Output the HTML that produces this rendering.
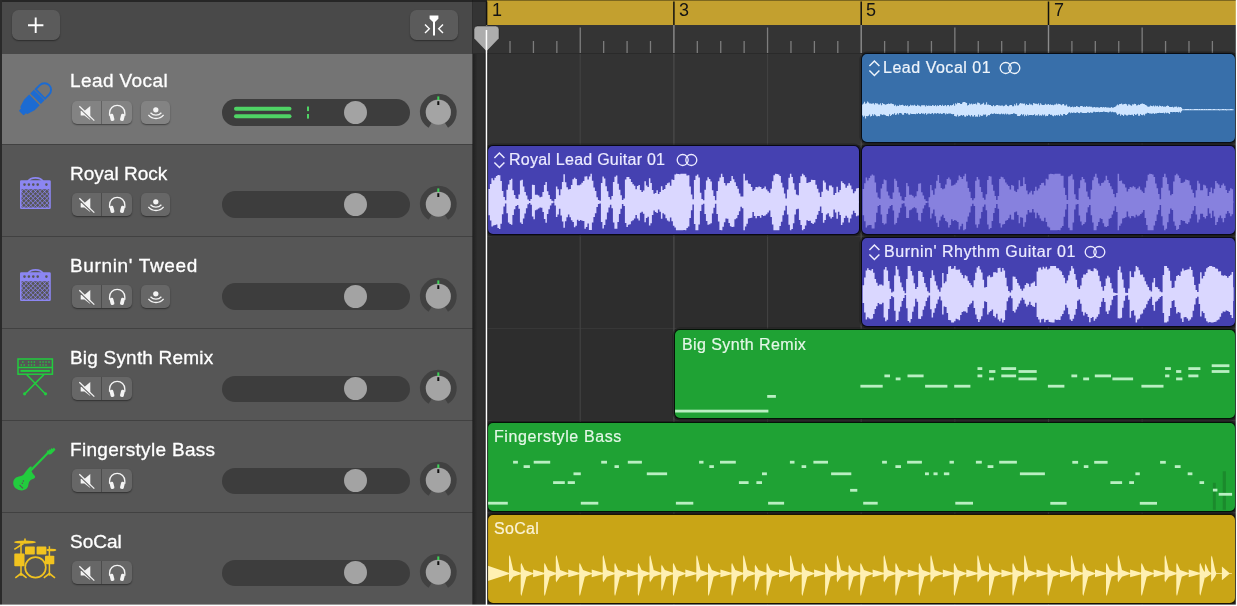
<!DOCTYPE html>
<html lang="en"><head><meta charset="utf-8"><title>Tracks</title>
<style>
*{box-sizing:border-box;margin:0;padding:0}
html,body{width:1237px;height:606px;overflow:hidden;background:#2d2d2d}
body{font-family:"Liberation Sans",sans-serif;position:relative;color:#fff}
.abs{position:absolute}
#left{position:absolute;left:0;top:0;width:473px;height:606px;background:#565656}
#lhead{position:absolute;left:0;top:0;width:473px;height:53.6px;background:#494949}
.row{position:absolute;left:0;width:473px;height:90.1px;background:#565656}
.row.sel{background:#747474}
.sep{position:absolute;left:0;width:473px;height:1px;background:#414141}
.tname{position:absolute;left:69.8px;top:16.9px;font-size:19px;line-height:22px;color:#fff;white-space:nowrap;-webkit-text-stroke:0.3px #fff;will-change:transform}
.btn{position:absolute;background:#676767;border-radius:5px;box-shadow:0 1px 1.5px rgba(0,0,0,.45)}
.sel .btn{background:#838383}
.ms{left:71.8px;top:47.2px;width:60px;height:23px}
.ms i{position:absolute;left:29.2px;top:0;width:1px;height:100%;background:#4c4c4c}
.sel .ms i{background:#626262}
.inp{left:140.5px;top:47.2px;width:29px;height:23px}
.slider{position:absolute;left:222.2px;top:45.7px;width:187.6px;height:26.6px;border-radius:13.3px;background:#3d3d3d}
.thumb{position:absolute;left:121.5px;top:1.8px;width:23px;height:23px;border-radius:50%;background:#a3a3a3}
.hbtn{position:absolute;top:10px;height:29.5px;width:48px;border-radius:6.5px;background:#5b5b5b;box-shadow:0 1px 1.5px rgba(0,0,0,.4)}
.region{position:absolute;border-radius:6px;border:1px solid rgba(0,0,0,.88);overflow:hidden;box-shadow:0 0 0 1.5px rgba(0,0,0,.28)}
.rlabel{position:absolute;font-size:16px;line-height:20px;white-space:nowrap;-webkit-text-stroke:0.2px currentColor;will-change:transform}
svg{position:absolute;left:0;top:0;overflow:visible}
</style></head>
<body>
<div class="abs" style="left:473px;top:0;width:764px;height:54px;background:#343434"></div>
<div class="abs" style="left:473px;top:54px;width:14px;height:552px;background:linear-gradient(90deg,#212121,#2e2e2e 4.5px)"></div>
<div class="abs" style="left:487px;top:54px;width:750px;height:89.7px;background:#333"></div>
<div class="abs" style="left:487px;top:143.7px;width:750px;height:1px;background:#373737"></div>
<div class="abs" style="left:487px;top:235.77999999999997px;width:750px;height:1px;background:#373737"></div>
<div class="abs" style="left:487px;top:327.86px;width:750px;height:1px;background:#373737"></div>
<div class="abs" style="left:487px;top:419.94px;width:750px;height:1px;background:#373737"></div>
<div class="abs" style="left:487px;top:512.02px;width:750px;height:1px;background:#373737"></div>
<svg width="1237" height="606"><rect x="486.00" y="54" width="1.2" height="552" fill="#4c4c4c"/><rect x="579.65" y="54" width="1.2" height="552" fill="#414141"/><rect x="673.30" y="54" width="1.2" height="552" fill="#4c4c4c"/><rect x="766.95" y="54" width="1.2" height="552" fill="#414141"/><rect x="860.60" y="54" width="1.2" height="552" fill="#4c4c4c"/><rect x="954.25" y="54" width="1.2" height="552" fill="#414141"/><rect x="1047.90" y="54" width="1.2" height="552" fill="#4c4c4c"/><rect x="1141.55" y="54" width="1.2" height="552" fill="#414141"/></svg>
<div class="abs" style="left:487px;top:0;width:750px;height:25px;background:#c3a02f;border-top:1.5px solid #7d671f"></div>
<div class="abs" style="left:473px;top:0;width:14px;height:1.5px;background:#222"></div>
<div class="abs" style="left:473px;top:53px;width:764px;height:1px;background:#2a2a2a"></div>
<svg width="1237" height="54"><rect x="485.85" y="1.5" width="1.5" height="23.5" fill="#111"/><rect x="485.90" y="25" width="1.4" height="28" fill="#8c8c8c"/><rect x="509.36" y="41" width="1.3" height="12" fill="#7c7c7c"/><rect x="532.78" y="41" width="1.3" height="12" fill="#7c7c7c"/><rect x="556.19" y="41" width="1.3" height="12" fill="#7c7c7c"/><rect x="579.60" y="27.5" width="1.3" height="25.5" fill="#7e7e7e"/><rect x="603.01" y="41" width="1.3" height="12" fill="#7c7c7c"/><rect x="626.43" y="41" width="1.3" height="12" fill="#7c7c7c"/><rect x="649.84" y="41" width="1.3" height="12" fill="#7c7c7c"/><rect x="673.15" y="1.5" width="1.5" height="23.5" fill="#111"/><rect x="673.20" y="25" width="1.4" height="28" fill="#8c8c8c"/><rect x="696.66" y="41" width="1.3" height="12" fill="#7c7c7c"/><rect x="720.08" y="41" width="1.3" height="12" fill="#7c7c7c"/><rect x="743.49" y="41" width="1.3" height="12" fill="#7c7c7c"/><rect x="766.90" y="27.5" width="1.3" height="25.5" fill="#7e7e7e"/><rect x="790.31" y="41" width="1.3" height="12" fill="#7c7c7c"/><rect x="813.73" y="41" width="1.3" height="12" fill="#7c7c7c"/><rect x="837.14" y="41" width="1.3" height="12" fill="#7c7c7c"/><rect x="860.45" y="1.5" width="1.5" height="23.5" fill="#111"/><rect x="860.50" y="25" width="1.4" height="28" fill="#8c8c8c"/><rect x="883.96" y="41" width="1.3" height="12" fill="#7c7c7c"/><rect x="907.38" y="41" width="1.3" height="12" fill="#7c7c7c"/><rect x="930.79" y="41" width="1.3" height="12" fill="#7c7c7c"/><rect x="954.20" y="27.5" width="1.3" height="25.5" fill="#7e7e7e"/><rect x="977.61" y="41" width="1.3" height="12" fill="#7c7c7c"/><rect x="1001.03" y="41" width="1.3" height="12" fill="#7c7c7c"/><rect x="1024.44" y="41" width="1.3" height="12" fill="#7c7c7c"/><rect x="1047.75" y="1.5" width="1.5" height="23.5" fill="#111"/><rect x="1047.80" y="25" width="1.4" height="28" fill="#8c8c8c"/><rect x="1071.26" y="41" width="1.3" height="12" fill="#7c7c7c"/><rect x="1094.67" y="41" width="1.3" height="12" fill="#7c7c7c"/><rect x="1118.09" y="41" width="1.3" height="12" fill="#7c7c7c"/><rect x="1141.50" y="27.5" width="1.3" height="25.5" fill="#7e7e7e"/><rect x="1164.91" y="41" width="1.3" height="12" fill="#7c7c7c"/><rect x="1188.33" y="41" width="1.3" height="12" fill="#7c7c7c"/><rect x="1211.74" y="41" width="1.3" height="12" fill="#7c7c7c"/></svg>
<div class="abs" style="left:491.8px;top:-0.5px;font-size:18px;line-height:20px;color:#141414;will-change:transform">1</div>
<div class="abs" style="left:679.1px;top:-0.5px;font-size:18px;line-height:20px;color:#141414;will-change:transform">3</div>
<div class="abs" style="left:866.4px;top:-0.5px;font-size:18px;line-height:20px;color:#141414;will-change:transform">5</div>
<div class="abs" style="left:1053.7px;top:-0.5px;font-size:18px;line-height:20px;color:#141414;will-change:transform">7</div>
<div class="region" style="left:860.9px;top:53px;width:375.0px;height:90px;background:#386faa"><svg width="14" height="20" style="left:5.900000000000091px;top:5px"><path d="M1.400 7L6.400 2L11.400 7M1.400 11.500L6.400 16.500L11.400 11.500" stroke="#eef4fb" stroke-width="1.500" fill="none"/></svg><div class="rlabel" style="top:4.00px;left:21.4px;letter-spacing:0.52px;color:#eef4fb">Lead Vocal 01</div><svg width="24" height="16" style="left:137.60000000000002px;top:7.3px"><circle cx="6.700" cy="7" r="5.500" stroke="#eef4fb" stroke-width="1.300" fill="none"/><circle cx="15.300" cy="7" r="5.500" stroke="#eef4fb" stroke-width="1.300" fill="none"/></svg><svg width="380" height="90"><path transform="translate(-861.9 -54.0)" d="M862.0 109.7V104.6H863.0V103.4H864.0V101.8H865.0V103.8H866.0V103.3H867.0V101.5H868.0V102.6H869.0V103.4H870.0V103.5H871.0V103.8H872.0V103.5H873.0V103.3H874.0V104.5H875.0V103.1H876.0V103.6H877.0V103.6H878.0V104.5H879.0V104.4H880.0V103.3H881.0V105.2H882.0V103.1H883.0V104.0H884.0V104.3H885.0V104.7H886.0V104.2H887.0V103.9H888.0V103.5H889.0V104.0H890.0V103.6H891.0V103.5H892.0V104.1H893.0V104.3H894.0V105.7H895.0V104.8H896.0V106.3H897.0V105.6H898.0V105.9H899.0V104.8H900.0V105.3H901.0V105.1H902.0V104.8H903.0V105.5H904.0V105.9H905.0V105.3H906.0V106.1H907.0V105.3H908.0V106.4H909.0V105.9H910.0V104.8H911.0V105.6H912.0V105.3H913.0V105.4H914.0V104.7H915.0V105.7H916.0V106.1H917.0V104.7H918.0V105.5H919.0V105.7H920.0V106.5H921.0V105.3H922.0V105.3H923.0V105.2H924.0V105.2H925.0V106.5H926.0V105.2H927.0V106.0H928.0V105.4H929.0V105.8H930.0V105.8H931.0V105.9H932.0V105.0H933.0V105.4H934.0V105.9H935.0V105.0H936.0V106.2H937.0V105.2H938.0V105.9H939.0V104.9H940.0V104.9H941.0V105.9H942.0V104.8H943.0V106.1H944.0V105.5H945.0V105.0H946.0V106.2H947.0V105.0H948.0V105.0H949.0V106.3H950.0V104.9H951.0V105.5H952.0V105.1H953.0V103.8H954.0V105.7H955.0V103.3H956.0V104.3H957.0V102.8H958.0V103.0H959.0V103.0H960.0V103.9H961.0V103.9H962.0V102.6H963.0V102.0H964.0V102.1H965.0V102.5H966.0V103.0H967.0V105.4H968.0V104.9H969.0V103.6H970.0V104.2H971.0V103.6H972.0V104.4H973.0V103.8H974.0V104.0H975.0V103.5H976.0V104.5H977.0V102.4H978.0V102.7H979.0V103.2H980.0V104.8H981.0V104.2H982.0V103.8H983.0V102.8H984.0V104.8H985.0V104.6H986.0V102.3H987.0V104.7H988.0V104.4H989.0V104.9H990.0V105.0H991.0V106.1H992.0V106.2H993.0V105.1H994.0V106.3H995.0V105.7H996.0V104.9H997.0V104.9H998.0V105.6H999.0V105.5H1000.0V105.7H1001.0V105.6H1002.0V105.4H1003.0V106.3H1004.0V105.7H1005.0V104.7H1006.0V104.8H1007.0V106.0H1008.0V106.3H1009.0V105.2H1010.0V105.0H1011.0V105.1H1012.0V106.3H1013.0V106.3H1014.0V104.3H1015.0V105.5H1016.0V103.3H1017.0V105.5H1018.0V105.2H1019.0V103.8H1020.0V103.1H1021.0V103.5H1022.0V103.6H1023.0V103.7H1024.0V103.6H1025.0V105.3H1026.0V104.1H1027.0V104.9H1028.0V104.9H1029.0V103.6H1030.0V104.6H1031.0V104.6H1032.0V105.3H1033.0V103.1H1034.0V103.6H1035.0V103.7H1036.0V103.8H1037.0V104.3H1038.0V103.2H1039.0V105.2H1040.0V103.2H1041.0V104.4H1042.0V105.0H1043.0V105.0H1044.0V104.7H1045.0V103.7H1046.0V104.7H1047.0V104.4H1048.0V104.0H1049.0V104.9H1050.0V104.3H1051.0V105.1H1052.0V104.7H1053.0V105.2H1054.0V104.4H1055.0V104.5H1056.0V103.6H1057.0V104.5H1058.0V103.7H1059.0V104.0H1060.0V104.6H1061.0V105.2H1062.0V104.2H1063.0V103.9H1064.0V105.4H1065.0V105.5H1066.0V104.5H1067.0V106.5H1068.0V106.8H1069.0V106.2H1070.0V107.2H1071.0V106.9H1072.0V106.5H1073.0V107.3H1074.0V106.7H1075.0V107.0H1076.0V106.0H1077.0V106.6H1078.0V107.0H1079.0V107.2H1080.0V106.1H1081.0V106.1H1082.0V106.3H1083.0V107.0H1084.0V106.5H1085.0V107.0H1086.0V106.1H1087.0V106.7H1088.0V106.7H1089.0V106.4H1090.0V106.7H1091.0V106.7H1092.0V107.6H1093.0V107.2H1094.0V106.9H1095.0V107.5H1096.0V107.2H1097.0V107.2H1098.0V107.6H1099.0V107.8H1100.0V107.1H1101.0V107.1H1102.0V107.6H1103.0V107.0H1104.0V107.4H1105.0V107.1H1106.0V107.6H1107.0V107.4H1108.0V107.6H1109.0V107.8H1110.0V107.8H1111.0V107.1H1112.0V107.8H1113.0V107.5H1114.0V107.1H1115.0V106.6H1116.0V105.5H1117.0V104.5H1118.0V105.3H1119.0V103.9H1120.0V103.9H1121.0V103.5H1122.0V104.5H1123.0V104.3H1124.0V104.1H1125.0V103.7H1126.0V104.3H1127.0V105.7H1128.0V104.2H1129.0V104.5H1130.0V105.3H1131.0V105.7H1132.0V104.2H1133.0V104.4H1134.0V103.7H1135.0V103.9H1136.0V105.6H1137.0V105.2H1138.0V104.5H1139.0V105.0H1140.0V104.1H1141.0V103.7H1142.0V103.6H1143.0V104.0H1144.0V104.3H1145.0V104.9H1146.0V105.5H1147.0V106.6H1148.0V106.7H1149.0V106.5H1150.0V105.6H1151.0V106.1H1152.0V106.3H1153.0V105.5H1154.0V106.5H1155.0V105.6H1156.0V106.2H1157.0V105.8H1158.0V106.8H1159.0V105.5H1160.0V106.0H1161.0V106.5H1162.0V106.1H1163.0V106.8H1164.0V106.5H1165.0V106.7H1166.0V106.0H1167.0V105.6H1168.0V106.1H1169.0V107.0H1170.0V107.1H1171.0V107.0H1172.0V106.8H1173.0V107.5H1174.0V106.7H1175.0V106.7H1176.0V106.5H1177.0V107.4H1178.0V106.7H1179.0V107.3H1180.0V106.9H1181.0V107.7H1182.0V109.2H1183.0V109.2H1184.0V109.2H1185.0V109.1H1186.0V109.0H1187.0V109.1H1188.0V109.0H1189.0V109.2H1190.0V109.0H1191.0V109.2H1192.0V109.2H1193.0V109.2H1194.0V109.1H1195.0V109.1H1196.0V109.1H1197.0V109.1H1198.0V109.2H1199.0V109.1H1200.0V109.2H1201.0V109.1H1202.0V109.1H1203.0V109.2H1204.0V109.1H1205.0V109.2H1206.0V109.1H1207.0V109.2H1208.0V109.1H1209.0V109.1H1210.0V109.1H1211.0V109.2H1212.0V109.2H1213.0V109.0H1214.0V109.1H1215.0V109.2H1216.0V109.2H1217.0V109.2H1218.0V109.1H1219.0V109.2H1220.0V109.2H1221.0V109.2H1222.0V109.1H1223.0V109.1H1224.0V109.2H1225.0V109.1H1226.0V109.2H1227.0V109.2H1228.0V109.2H1229.0V109.2H1230.0V109.1H1231.0V109.1H1232.0V109.2H1233.0V109.2H1233.5V109.7V110.2H1233.0V110.3H1232.0V110.3H1231.0V110.3H1230.0V110.3H1229.0V110.2H1228.0V110.3H1227.0V110.4H1226.0V110.2H1225.0V110.2H1224.0V110.2H1223.0V110.3H1222.0V110.3H1221.0V110.3H1220.0V110.4H1219.0V110.2H1218.0V110.3H1217.0V110.2H1216.0V110.3H1215.0V110.2H1214.0V110.2H1213.0V110.2H1212.0V110.2H1211.0V110.3H1210.0V110.2H1209.0V110.3H1208.0V110.3H1207.0V110.2H1206.0V110.3H1205.0V110.2H1204.0V110.2H1203.0V110.2H1202.0V110.3H1201.0V110.2H1200.0V110.2H1199.0V110.2H1198.0V110.2H1197.0V110.3H1196.0V110.3H1195.0V110.2H1194.0V110.3H1193.0V110.2H1192.0V110.3H1191.0V110.2H1190.0V110.3H1189.0V110.2H1188.0V110.3H1187.0V110.2H1186.0V110.2H1185.0V110.3H1184.0V110.2H1183.0V110.2H1182.0V111.2H1181.0V112.8H1180.0V111.8H1179.0V112.5H1178.0V112.0H1177.0V112.1H1176.0V112.3H1175.0V112.1H1174.0V111.9H1173.0V112.2H1172.0V112.0H1171.0V112.1H1170.0V113.9H1169.0V113.3H1168.0V112.7H1167.0V113.3H1166.0V112.6H1165.0V113.4H1164.0V112.8H1163.0V112.9H1162.0V112.9H1161.0V112.9H1160.0V112.8H1159.0V112.9H1158.0V113.0H1157.0V113.5H1156.0V113.2H1155.0V114.1H1154.0V113.3H1153.0V113.4H1152.0V113.7H1151.0V113.5H1150.0V113.4H1149.0V112.9H1148.0V112.7H1147.0V113.4H1146.0V113.7H1145.0V115.4H1144.0V114.5H1143.0V115.3H1142.0V115.1H1141.0V114.0H1140.0V115.7H1139.0V115.8H1138.0V113.8H1137.0V114.5H1136.0V115.1H1135.0V114.0H1134.0V115.9H1133.0V114.7H1132.0V114.8H1131.0V114.9H1130.0V114.7H1129.0V114.8H1128.0V115.5H1127.0V115.4H1126.0V114.8H1125.0V114.4H1124.0V115.9H1123.0V115.0H1122.0V114.5H1121.0V115.7H1120.0V113.7H1119.0V114.2H1118.0V115.0H1117.0V113.5H1116.0V112.2H1115.0V112.2H1114.0V112.2H1113.0V111.7H1112.0V112.2H1111.0V111.6H1110.0V111.7H1109.0V112.4H1108.0V112.3H1107.0V111.9H1106.0V111.9H1105.0V111.7H1104.0V111.5H1103.0V111.9H1102.0V111.9H1101.0V112.1H1100.0V112.3H1099.0V111.7H1098.0V112.0H1097.0V112.1H1096.0V112.3H1095.0V111.7H1094.0V111.7H1093.0V112.7H1092.0V112.7H1091.0V112.2H1090.0V112.9H1089.0V112.5H1088.0V112.2H1087.0V112.9H1086.0V113.1H1085.0V113.1H1084.0V113.0H1083.0V113.1H1082.0V112.6H1081.0V112.2H1080.0V113.3H1079.0V113.0H1078.0V112.2H1077.0V112.6H1076.0V112.9H1075.0V112.8H1074.0V112.6H1073.0V113.1H1072.0V112.6H1071.0V113.3H1070.0V112.2H1069.0V112.7H1068.0V113.9H1067.0V115.0H1066.0V115.1H1065.0V114.1H1064.0V114.1H1063.0V115.8H1062.0V115.3H1061.0V114.2H1060.0V116.0H1059.0V114.7H1058.0V115.5H1057.0V115.1H1056.0V115.8H1055.0V115.3H1054.0V116.3H1053.0V115.8H1052.0V114.8H1051.0V114.9H1050.0V114.0H1049.0V114.6H1048.0V116.1H1047.0V115.7H1046.0V116.3H1045.0V114.5H1044.0V115.4H1043.0V114.6H1042.0V115.7H1041.0V115.2H1040.0V115.8H1039.0V114.3H1038.0V115.5H1037.0V115.2H1036.0V115.8H1035.0V114.3H1034.0V115.0H1033.0V115.2H1032.0V115.0H1031.0V114.9H1030.0V114.9H1029.0V115.4H1028.0V114.4H1027.0V116.0H1026.0V114.7H1025.0V116.2H1024.0V114.2H1023.0V115.2H1022.0V114.0H1021.0V115.3H1020.0V116.0H1019.0V116.0H1018.0V116.0H1017.0V114.3H1016.0V114.0H1015.0V113.5H1014.0V113.3H1013.0V114.0H1012.0V114.0H1011.0V114.2H1010.0V114.6H1009.0V114.5H1008.0V113.8H1007.0V114.4H1006.0V113.6H1005.0V114.6H1004.0V113.7H1003.0V114.3H1002.0V113.4H1001.0V114.3H1000.0V114.3H999.0V113.7H998.0V114.1H997.0V113.7H996.0V114.1H995.0V113.3H994.0V113.7H993.0V114.0H992.0V113.6H991.0V114.0H990.0V115.2H989.0V115.0H988.0V115.8H987.0V116.8H986.0V114.6H985.0V114.8H984.0V114.4H983.0V115.7H982.0V115.9H981.0V115.2H980.0V116.8H979.0V114.4H978.0V116.7H977.0V116.6H976.0V116.7H975.0V114.9H974.0V116.5H973.0V116.6H972.0V115.1H971.0V116.6H970.0V115.5H969.0V114.8H968.0V115.9H967.0V115.6H966.0V116.8H965.0V116.6H964.0V115.0H963.0V115.8H962.0V115.0H961.0V115.6H960.0V116.0H959.0V116.6H958.0V114.8H957.0V116.5H956.0V116.3H955.0V116.0H954.0V113.9H953.0V114.2H952.0V114.0H951.0V113.5H950.0V113.4H949.0V113.5H948.0V114.1H947.0V113.4H946.0V114.5H945.0V113.3H944.0V113.1H943.0V113.7H942.0V114.1H941.0V113.2H940.0V113.7H939.0V113.5H938.0V113.1H937.0V113.7H936.0V113.3H935.0V113.3H934.0V114.3H933.0V112.9H932.0V113.6H931.0V114.0H930.0V113.5H929.0V113.5H928.0V113.8H927.0V114.7H926.0V113.0H925.0V114.3H924.0V113.6H923.0V113.8H922.0V113.0H921.0V114.1H920.0V114.0H919.0V112.9H918.0V113.9H917.0V113.5H916.0V114.3H915.0V113.9H914.0V114.1H913.0V114.0H912.0V113.9H911.0V113.6H910.0V114.7H909.0V114.6H908.0V113.2H907.0V113.7H906.0V113.0H905.0V113.1H904.0V114.8H903.0V114.8H902.0V113.6H901.0V113.0H900.0V113.0H899.0V114.4H898.0V113.2H897.0V114.5H896.0V114.9H895.0V113.2H894.0V114.6H893.0V114.1H892.0V115.1H891.0V116.1H890.0V114.2H889.0V116.2H888.0V116.1H887.0V116.0H886.0V115.3H885.0V114.8H884.0V114.6H883.0V115.0H882.0V114.4H881.0V114.2H880.0V116.3H879.0V116.0H878.0V116.3H877.0V116.2H876.0V115.3H875.0V114.2H874.0V115.7H873.0V114.3H872.0V116.1H871.0V116.5H870.0V114.6H869.0V115.8H868.0V116.3H867.0V116.0H866.0V118.5H865.0V115.7H864.0V116.7H863.0V115.6H862.0Z" fill="#cfe5ff"/></svg></div>
<div class="region" style="left:487.1px;top:145px;width:373.4px;height:90px;background:#4541b1"><svg width="14" height="20" style="left:5.100000000000023px;top:5px"><path d="M1.400 7L6.400 2L11.400 7M1.400 11.500L6.400 16.500L11.400 11.500" stroke="#ecebff" stroke-width="1.500" fill="none"/></svg><div class="rlabel" style="top:4.00px;left:20.8px;letter-spacing:0.25px;color:#ecebff">Royal Lead Guitar 01</div><svg width="24" height="16" style="left:188.0px;top:7.3px"><circle cx="6.700" cy="7" r="5.500" stroke="#ecebff" stroke-width="1.300" fill="none"/><circle cx="15.300" cy="7" r="5.500" stroke="#ecebff" stroke-width="1.300" fill="none"/></svg><svg width="380" height="90"><path transform="translate(-488.1 -146.0)" d="M488.5 202.0V189.1H490.0V184.1H491.5V178.2H493.0V180.3H494.5V177.7H496.0V176.1H497.5V174.9H499.0V175.2H500.5V181.1H502.0V191.0H503.5V197.1H505.0V200.2H506.5V189.8H508.0V184.4H509.5V180.1H511.0V178.8H512.5V190.3H514.0V195.0H515.5V198.5H517.0V199.0H518.5V194.6H520.0V180.6H521.5V179.7H523.0V186.4H524.5V191.9H526.0V195.6H527.5V199.6H529.0V200.9H530.5V198.9H532.0V184.8H533.5V185.0H535.0V194.8H536.5V194.7H538.0V195.5H539.5V197.2H541.0V196.7H542.5V192.1H544.0V184.9H545.5V182.1H547.0V191.2H548.5V194.9H550.0V199.0H551.5V200.8H553.0V201.4H554.5V198.9H556.0V186.5H557.5V189.2H559.0V195.3H560.5V189.3H562.0V182.1H563.5V174.3H565.0V182.2H566.5V187.3H568.0V189.4H569.5V188.9H571.0V185.1H572.5V179.3H574.0V177.7H575.5V178.9H577.0V185.3H578.5V185.2H580.0V184.6H581.5V182.8H583.0V181.1H584.5V176.4H586.0V176.2H587.5V179.6H589.0V176.6H590.5V173.8H592.0V180.8H593.5V187.4H595.0V191.0H596.5V197.3H598.0V200.1H599.5V200.7H601.0V183.1H602.5V176.6H604.0V178.6H605.5V186.3H607.0V191.2H608.5V197.1H610.0V199.4H611.5V196.0H613.0V181.9H614.5V176.7H616.0V175.6H617.5V183.7H619.0V189.7H620.5V195.3H622.0V199.9H623.5V198.4H625.0V179.4H626.5V177.1H628.0V176.9H629.5V178.9H631.0V182.0H632.5V184.2H634.0V185.8H635.5V189.3H637.0V186.0H638.5V184.9H640.0V190.0H641.5V191.9H643.0V190.4H644.5V181.3H646.0V185.5H647.5V187.1H649.0V178.3H650.5V183.0H652.0V189.9H653.5V193.7H655.0V193.1H656.5V190.2H658.0V193.9H659.5V191.9H661.0V186.2H662.5V189.9H664.0V189.1H665.5V185.0H667.0V183.3H668.5V182.5H670.0V185.7H671.5V179.5H673.0V180.1H674.5V174.4H676.0V173.8H677.5V174.0H679.0V174.2H680.5V173.8H682.0V173.8H683.5V173.8H685.0V173.8H686.5V175.5H688.0V175.3H689.5V186.5H691.0V194.5H692.5V199.3H694.0V180.1H695.5V175.7H697.0V174.4H698.5V177.4H700.0V192.8H701.5V199.0H703.0V200.2H704.5V189.8H706.0V180.6H707.5V177.3H709.0V178.9H710.5V181.6H712.0V190.2H713.5V196.1H715.0V200.3H716.5V191.0H718.0V181.2H719.5V177.6H721.0V173.8H722.5V177.0H724.0V183.1H725.5V185.4H727.0V183.3H728.5V182.9H730.0V180.9H731.5V176.0H733.0V179.3H734.5V182.2H736.0V186.0H737.5V188.7H739.0V193.4H740.5V196.6H742.0V196.4H743.5V173.8H745.0V180.4H746.5V180.3H748.0V183.4H749.5V184.1H751.0V187.0H752.5V191.1H754.0V189.4H755.5V187.0H757.0V187.3H758.5V186.4H760.0V187.0H761.5V189.0H763.0V188.3H764.5V186.5H766.0V189.4H767.5V191.2H769.0V192.8H770.5V188.7H772.0V181.3H773.5V175.3H775.0V173.8H776.5V174.0H778.0V174.5H779.5V176.1H781.0V182.8H782.5V187.4H784.0V193.4H785.5V198.6H787.0V189.6H788.5V177.7H790.0V173.8H791.5V177.0H793.0V183.2H794.5V189.7H796.0V194.4H797.5V195.2H799.0V183.1H800.5V176.2H802.0V173.8H803.5V175.3H805.0V177.3H806.5V183.0H808.0V182.6H809.5V182.1H811.0V179.8H812.5V180.1H814.0V180.1H815.5V184.8H817.0V188.8H818.5V192.4H820.0V197.0H821.5V191.8H823.0V180.5H824.5V182.6H826.0V189.4H827.5V190.8H829.0V185.4H830.5V185.6H832.0V187.2H833.5V194.9H835.0V193.0H836.5V186.8H838.0V192.3H839.5V190.1H841.0V181.2H842.5V182.9H844.0V184.2H845.5V187.8H847.0V185.7H848.5V183.3H850.0V185.4H851.5V189.2H853.0V193.3H854.5V191.2H856.0V188.4H857.5V187.9H859.0V201.5H859.5V202.0V202.5H859.0V215.6H857.5V216.3H856.0V212.9H854.5V210.7H853.0V214.4H851.5V218.4H850.0V222.6H848.5V217.8H847.0V215.8H845.5V218.1H844.0V222.4H842.5V224.9H841.0V214.9H839.5V211.7H838.0V218.8H836.5V212.5H835.0V209.4H833.5V217.1H832.0V218.4H830.5V216.6H829.0V213.2H827.5V214.6H826.0V220.1H824.5V222.8H823.0V212.9H821.5V206.4H820.0V210.9H818.5V214.8H817.0V218.9H815.5V222.6H814.0V223.9H812.5V223.0H811.0V220.7H809.5V220.9H808.0V220.2H806.5V225.6H805.0V229.1H803.5V230.2H802.0V224.9H800.5V220.0H799.0V208.7H797.5V209.3H796.0V214.5H794.5V223.3H793.0V229.1H791.5V230.2H790.0V224.8H788.5V214.5H787.0V205.8H785.5V210.5H784.0V215.2H782.5V221.7H781.0V226.1H779.5V230.2H778.0V230.2H776.5V230.2H775.0V230.2H773.5V224.5H772.0V217.0H770.5V210.4H769.0V212.6H767.5V214.3H766.0V215.6H764.5V216.1H763.0V214.9H761.5V217.7H760.0V216.1H758.5V216.1H757.0V218.3H755.5V216.0H754.0V211.9H752.5V217.8H751.0V218.0H749.5V218.5H748.0V223.8H746.5V226.4H745.0V230.2H743.5V208.2H742.0V206.7H740.5V211.3H739.0V214.9H737.5V218.2H736.0V219.3H734.5V226.7H733.0V226.9H731.5V226.2H730.0V222.9H728.5V218.7H727.0V218.6H725.5V222.3H724.0V226.7H722.5V230.2H721.0V230.0H719.5V221.6H718.0V213.9H716.5V203.8H715.0V207.7H713.5V213.6H712.0V223.3H710.5V224.3H709.0V224.8H707.5V221.1H706.0V214.1H704.5V203.7H703.0V204.7H701.5V211.1H700.0V224.4H698.5V230.2H697.0V230.2H695.5V224.1H694.0V204.6H692.5V210.2H691.0V218.0H689.5V226.6H688.0V228.1H686.5V230.2H685.0V230.0H683.5V230.2H682.0V230.2H680.5V230.2H679.0V230.2H677.5V230.2H676.0V227.4H674.5V225.8H673.0V221.2H671.5V217.6H670.0V221.5H668.5V220.6H667.0V218.3H665.5V214.5H664.0V213.3H662.5V218.8H661.0V211.8H659.5V209.4H658.0V213.1H656.5V212.1H655.0V210.5H653.5V215.0H652.0V223.3H650.5V225.6H649.0V216.7H647.5V218.0H646.0V222.2H644.5V213.8H643.0V211.7H641.5V212.8H640.0V220.5H638.5V218.6H637.0V215.0H635.5V218.5H634.0V220.2H632.5V221.2H631.0V224.3H629.5V224.7H628.0V227.0H626.5V222.9H625.0V206.0H623.5V204.1H622.0V208.7H620.5V213.9H619.0V221.9H617.5V228.8H616.0V228.7H614.5V222.6H613.0V208.3H611.5V204.8H610.0V207.4H608.5V212.6H607.0V219.5H605.5V225.1H604.0V228.4H602.5V222.0H601.0V203.4H599.5V203.9H598.0V207.1H596.5V213.2H595.0V217.1H593.5V222.6H592.0V230.0H590.5V230.1H589.0V223.4H587.5V226.9H586.0V228.7H584.5V221.1H583.0V220.8H581.5V219.9H580.0V220.9H578.5V219.8H577.0V225.7H575.5V227.2H574.0V222.1H572.5V220.3H571.0V217.3H569.5V214.5H568.0V217.3H566.5V221.2H565.0V227.7H563.5V221.5H562.0V215.4H560.5V208.7H559.0V214.5H557.5V216.9H556.0V205.5H554.5V202.6H553.0V203.2H551.5V205.6H550.0V209.2H548.5V214.0H547.0V222.7H545.5V219.1H544.0V211.9H542.5V207.8H541.0V207.5H539.5V208.6H538.0V209.6H536.5V210.3H535.0V219.3H533.5V216.6H532.0V204.8H530.5V203.1H529.0V204.3H527.5V208.3H526.0V213.4H524.5V218.5H523.0V224.0H521.5V222.6H520.0V208.7H518.5V205.1H517.0V206.0H515.5V209.2H514.0V215.1H512.5V224.8H511.0V223.9H509.5V222.5H508.0V213.2H506.5V203.6H505.0V206.4H503.5V214.3H502.0V223.7H500.5V228.9H499.0V228.1H497.5V224.6H496.0V225.1H494.5V225.6H493.0V226.5H491.5V220.4H490.0V215.2H488.5Z" fill="#dad7ff"/></svg></div>
<div class="region" style="left:860.9px;top:145px;width:375.0px;height:90px;background:#4541b1"><svg width="380" height="90"><path transform="translate(-861.9 -146.0)" d="M862.5 202.0V189.1H864.0V183.2H865.5V177.4H867.0V180.4H868.5V177.9H870.0V175.7H871.5V174.4H873.0V175.6H874.5V182.5H876.0V192.4H877.5V197.6H879.0V198.8H880.5V188.4H882.0V184.0H883.5V179.6H885.0V180.2H886.5V191.4H888.0V195.6H889.5V198.6H891.0V199.1H892.5V192.5H894.0V178.7H895.5V180.7H897.0V187.0H898.5V192.5H900.0V196.2H901.5V200.2H903.0V200.8H904.5V197.1H906.0V182.9H907.5V186.2H909.0V194.8H910.5V194.7H912.0V195.7H913.5V197.5H915.0V196.2H916.5V191.3H918.0V183.8H919.5V183.2H921.0V192.3H922.5V195.4H924.0V199.2H925.5V201.1H927.0V201.5H928.5V197.3H930.0V184.9H931.5V190.3H933.0V194.7H934.5V188.5H936.0V180.7H937.5V175.1H939.0V182.9H940.5V188.0H942.0V189.2H943.5V188.4H945.0V184.6H946.5V179.0H948.0V177.4H949.5V179.5H951.0V185.8H952.5V185.2H954.0V184.6H955.5V182.8H957.0V180.2H958.5V175.6H960.0V176.9H961.5V179.1H963.0V176.2H964.5V173.8H966.0V181.6H967.5V188.1H969.0V191.8H970.5V198.0H972.0V200.3H973.5V198.2H975.0V180.8H976.5V177.1H978.0V179.4H979.5V187.1H981.0V191.9H982.5V197.7H984.0V199.7H985.5V194.2H987.0V180.0H988.5V176.1H990.0V176.5H991.5V184.7H993.0V190.7H994.5V196.0H996.0V200.1H997.5V196.0H999.0V179.0H1000.5V176.7H1002.0V177.2H1003.5V179.3H1005.0V182.4H1006.5V184.4H1008.0V186.1H1009.5V189.6H1011.0V185.0H1012.5V185.7H1014.0V190.7H1015.5V192.0H1017.0V189.3H1018.5V180.2H1020.0V186.3H1021.5V186.0H1023.0V177.2H1024.5V183.9H1026.0V190.5H1027.5V194.3H1029.0V192.6H1030.5V190.7H1032.0V194.4H1033.5V191.0H1035.0V186.8H1036.5V190.5H1038.0V188.4H1039.5V184.9H1041.0V183.1H1042.5V182.8H1044.0V185.6H1045.5V178.7H1047.0V179.5H1048.5V174.3H1050.0V173.8H1051.5V173.9H1053.0V174.2H1054.5V173.8H1056.0V173.8H1057.5V173.8H1059.0V173.8H1060.5V175.8H1062.0V175.8H1063.5V187.7H1065.0V195.1H1066.5V200.0H1068.0V176.4H1069.5V175.7H1071.0V174.3H1072.5V179.6H1074.0V194.3H1075.5V199.2H1077.0V199.9H1078.5V188.3H1080.0V180.2H1081.5V176.9H1083.0V179.1H1084.5V182.6H1086.0V191.4H1087.5V196.7H1089.0V199.2H1090.5V189.7H1092.0V180.2H1093.5V176.7H1095.0V173.8H1096.5V177.8H1098.0V183.4H1099.5V185.7H1101.0V183.0H1102.5V182.5H1104.0V180.5H1105.5V175.8H1107.0V180.0H1108.5V182.9H1110.0V186.3H1111.5V189.2H1113.0V193.9H1114.5V197.2H1116.0V193.1H1117.5V173.8H1119.0V181.1H1120.5V180.6H1122.0V183.6H1123.5V184.3H1125.0V187.5H1126.5V191.6H1128.0V188.9H1129.5V187.1H1131.0V187.4H1132.5V186.2H1134.0V187.3H1135.5V189.3H1137.0V188.2H1138.5V186.5H1140.0V189.7H1141.5V191.4H1143.0V193.0H1144.5V187.6H1146.0V180.8H1147.5V174.7H1149.0V173.8H1150.5V174.1H1152.0V174.6H1153.5V176.9H1155.0V183.6H1156.5V188.3H1158.0V194.0H1159.5V199.2H1161.0V187.8H1162.5V176.9H1164.0V173.8H1165.5V177.4H1167.0V184.1H1168.5V190.5H1170.0V195.3H1171.5V193.9H1173.0V181.6H1174.5V175.3H1176.0V173.8H1177.5V175.5H1179.0V178.0H1180.5V183.1H1182.0V182.7H1183.5V181.8H1185.0V179.6H1186.5V180.0H1188.0V180.4H1189.5V185.2H1191.0V189.5H1192.5V193.0H1194.0V197.5H1195.5V190.3H1197.0V180.7H1198.5V183.4H1200.0V190.2H1201.5V190.3H1203.0V184.8H1204.5V185.5H1206.0V188.3H1207.5V195.9H1209.0V192.1H1210.5V187.6H1212.0V193.2H1213.5V188.7H1215.0V181.0H1216.5V183.3H1218.0V184.5H1219.5V188.0H1221.0V185.3H1222.5V183.6H1224.0V185.7H1225.5V189.9H1227.0V192.9H1228.5V190.8H1230.0V188.3H1231.5V189.3H1233.0V201.5H1233.5V202.0V202.5H1233.0V214.2H1231.5V216.3H1230.0V213.3H1228.5V211.1H1227.0V213.7H1225.5V218.1H1224.0V222.3H1222.5V218.2H1221.0V215.5H1219.5V217.8H1218.0V222.0H1216.5V225.1H1215.0V216.4H1213.5V210.8H1212.0V217.9H1210.5V213.6H1209.0V208.3H1207.5V216.1H1206.0V218.6H1204.5V217.1H1203.0V213.8H1201.5V213.8H1200.0V219.4H1198.5V222.6H1197.0V214.6H1195.5V205.9H1194.0V210.4H1192.5V214.1H1191.0V218.6H1189.5V222.3H1188.0V223.9H1186.5V223.2H1185.0V220.9H1183.5V220.7H1182.0V220.0H1180.5V224.9H1179.0V229.0H1177.5V230.1H1176.0V225.7H1174.5V221.4H1173.0V210.0H1171.5V208.5H1170.0V213.7H1168.5V222.3H1167.0V228.7H1165.5V230.2H1164.0V225.6H1162.5V216.3H1161.0V205.1H1159.5V209.9H1158.0V214.4H1156.5V220.9H1155.0V225.4H1153.5V230.2H1152.0V230.2H1150.5V230.2H1149.0V230.2H1147.5V225.1H1146.0V218.1H1144.5V210.1H1143.0V212.4H1141.5V214.0H1140.0V215.6H1138.5V216.2H1137.0V214.7H1135.5V217.5H1134.0V216.2H1132.5V216.0H1131.0V218.2H1129.5V216.6H1128.0V211.4H1126.5V217.2H1125.0V217.9H1123.5V218.4H1122.0V223.5H1120.5V225.7H1119.0V230.2H1117.5V211.9H1116.0V206.2H1114.5V210.8H1113.0V214.4H1111.5V217.9H1110.0V218.7H1108.5V226.0H1107.0V227.1H1105.5V226.6H1104.0V223.3H1102.5V218.9H1101.0V218.3H1099.5V222.0H1098.0V225.9H1096.5V230.2H1095.0V230.2H1093.5V222.6H1092.0V215.3H1090.5V205.0H1089.0V207.2H1087.5V212.4H1086.0V222.3H1084.5V224.1H1083.0V225.2H1081.5V221.5H1080.0V215.6H1078.5V204.1H1077.0V204.5H1075.5V209.5H1074.0V222.4H1072.5V230.2H1071.0V230.2H1069.5V227.8H1068.0V203.9H1066.5V209.5H1065.0V216.8H1063.5V226.1H1062.0V227.8H1060.5V230.2H1059.0V230.0H1057.5V230.2H1056.0V230.2H1054.5V230.2H1053.0V230.2H1051.5V230.2H1050.0V227.5H1048.5V226.5H1047.0V221.9H1045.5V217.7H1044.0V221.2H1042.5V220.8H1041.0V218.4H1039.5V215.2H1038.0V212.7H1036.5V218.2H1035.0V212.6H1033.5V208.9H1032.0V212.6H1030.5V212.6H1029.0V209.9H1027.5V214.4H1026.0V222.3H1024.5V226.7H1023.0V217.7H1021.5V217.2H1020.0V223.3H1018.5V214.9H1017.0V211.5H1015.5V212.2H1014.0V219.7H1012.5V219.6H1011.0V214.7H1009.5V218.2H1008.0V220.0H1006.5V220.8H1005.0V224.0H1003.5V224.4H1002.0V227.4H1000.5V223.3H999.0V208.7H997.5V203.9H996.0V208.0H994.5V212.9H993.0V220.9H991.5V227.9H990.0V229.3H988.5V224.5H987.0V210.2H985.5V204.5H984.0V206.7H982.5V211.9H981.0V218.6H979.5V224.3H978.0V227.8H976.5V224.5H975.0V205.9H973.5V203.7H972.0V206.3H970.5V212.4H969.0V216.4H967.5V221.8H966.0V229.2H964.5V230.2H963.0V223.8H961.5V226.3H960.0V229.5H958.5V222.0H957.0V220.7H955.5V219.9H954.0V221.0H952.5V219.2H951.0V225.1H949.5V227.5H948.0V222.3H946.5V220.9H945.0V217.9H943.5V214.7H942.0V216.5H940.5V220.5H939.0V227.0H937.5V222.8H936.0V216.2H934.5V209.4H933.0V213.4H931.5V218.4H930.0V207.2H928.5V202.5H927.0V203.0H925.5V205.3H924.0V208.6H922.5V212.9H921.0V221.6H919.5V220.2H918.0V212.7H916.5V208.3H915.0V207.2H913.5V208.3H912.0V209.6H910.5V210.2H909.0V218.1H907.5V218.1H906.0V206.4H904.5V203.2H903.0V203.7H901.5V207.8H900.0V212.7H898.5V217.8H897.0V223.0H895.5V224.5H894.0V210.6H892.5V205.0H891.0V205.9H889.5V208.5H888.0V213.9H886.5V223.5H885.0V224.4H883.5V223.0H882.0V214.5H880.5V204.9H879.0V206.0H877.5V212.7H876.0V222.3H874.5V228.5H873.0V228.5H871.5V225.0H870.0V225.0H868.5V225.4H867.0V227.4H865.5V221.2H864.0V215.2H862.5Z" fill="#8781de"/></svg></div>
<div class="region" style="left:860.9px;top:237px;width:375.0px;height:90px;background:#4541b1"><svg width="14" height="20" style="left:5.800000000000068px;top:5px"><path d="M1.400 7L6.400 2L11.400 7M1.400 11.500L6.400 16.500L11.400 11.500" stroke="#ecebff" stroke-width="1.500" fill="none"/></svg><div class="rlabel" style="top:4.00px;left:21.9px;letter-spacing:0.53px;color:#ecebff">Burnin' Rhythm Guitar 01</div><svg width="24" height="16" style="left:222.5000000000001px;top:7.3px"><circle cx="6.700" cy="7" r="5.500" stroke="#ecebff" stroke-width="1.300" fill="none"/><circle cx="15.300" cy="7" r="5.500" stroke="#ecebff" stroke-width="1.300" fill="none"/></svg><svg width="380" height="90"><path transform="translate(-861.9 -238.0)" d="M862.5 294.2V285.3H864.0V277.6H865.5V270.6H867.0V268.2H868.5V270.1H870.0V270.5H871.5V269.0H873.0V272.7H874.5V279.0H876.0V282.8H877.5V285.8H879.0V284.6H880.5V284.4H882.0V285.6H883.5V269.6H885.0V267.0H886.5V270.6H888.0V280.9H889.5V288.8H891.0V292.6H892.5V291.4H894.0V275.6H895.5V266.0H897.0V269.6H898.5V276.3H900.0V282.4H901.5V287.3H903.0V290.7H904.5V293.3H906.0V279.0H907.5V266.0H909.0V266.0H910.5V271.1H912.0V275.4H913.5V283.2H915.0V289.1H916.5V287.0H918.0V271.0H919.5V270.7H921.0V271.9H922.5V277.0H924.0V283.1H925.5V287.2H927.0V291.2H928.5V292.7H930.0V278.1H931.5V270.2H933.0V275.3H934.5V281.2H936.0V285.6H937.5V289.5H939.0V291.8H940.5V287.6H942.0V273.1H943.5V283.2H945.0V281.4H946.5V274.0H948.0V266.5H949.5V266.0H951.0V268.9H952.5V268.6H954.0V266.0H955.5V269.7H957.0V269.8H958.5V269.5H960.0V272.7H961.5V275.1H963.0V278.3H964.5V275.3H966.0V276.3H967.5V280.8H969.0V282.9H970.5V285.3H972.0V287.3H973.5V280.3H975.0V272.8H976.5V267.4H978.0V266.0H979.5V269.6H981.0V272.4H982.5V279.8H984.0V287.6H985.5V286.9H987.0V276.6H988.5V275.3H990.0V277.3H991.5V276.8H993.0V272.2H994.5V272.2H996.0V272.8H997.5V268.0H999.0V267.7H1000.5V271.8H1002.0V267.9H1003.5V270.4H1005.0V277.8H1006.5V286.2H1008.0V290.9H1009.5V292.5H1011.0V290.3H1012.5V276.4H1014.0V276.7H1015.5V279.1H1017.0V282.9H1018.5V285.4H1020.0V288.7H1021.5V290.8H1023.0V288.6H1024.5V285.0H1026.0V282.9H1027.5V283.7H1029.0V286.7H1030.5V283.5H1032.0V282.8H1033.5V281.6H1035.0V286.0H1036.5V271.6H1038.0V267.8H1039.5V267.5H1041.0V269.5H1042.5V266.7H1044.0V268.5H1045.5V266.8H1047.0V269.5H1048.5V268.4H1050.0V266.0H1051.5V266.0H1053.0V266.0H1054.5V266.0H1056.0V268.2H1057.5V268.2H1059.0V270.2H1060.5V271.6H1062.0V275.0H1063.5V277.7H1065.0V283.2H1066.5V280.5H1068.0V275.3H1069.5V270.8H1071.0V266.0H1072.5V268.6H1074.0V274.1H1075.5V279.7H1077.0V287.2H1078.5V288.9H1080.0V285.4H1081.5V277.7H1083.0V274.4H1084.5V274.6H1086.0V273.0H1087.5V269.6H1089.0V269.6H1090.5V270.9H1092.0V271.3H1093.5V268.2H1095.0V268.8H1096.5V270.4H1098.0V275.8H1099.5V281.2H1101.0V286.7H1102.5V290.7H1104.0V286.0H1105.5V278.6H1107.0V275.7H1108.5V277.6H1110.0V283.0H1111.5V288.5H1113.0V292.4H1114.5V293.0H1116.0V293.3H1117.5V269.9H1119.0V266.5H1120.5V272.6H1122.0V279.5H1123.5V287.7H1125.0V292.7H1126.5V293.1H1128.0V288.4H1129.5V271.2H1131.0V277.0H1132.5V277.2H1134.0V271.6H1135.5V266.1H1137.0V267.3H1138.5V270.2H1140.0V274.8H1141.5V274.6H1143.0V277.2H1144.5V281.3H1146.0V284.4H1147.5V286.9H1149.0V290.2H1150.5V291.6H1152.0V282.5H1153.5V278.1H1155.0V287.1H1156.5V287.3H1158.0V289.1H1159.5V291.4H1161.0V292.3H1162.5V274.9H1164.0V266.0H1165.5V266.0H1167.0V267.9H1168.5V270.7H1170.0V280.8H1171.5V287.9H1173.0V287.6H1174.5V280.7H1176.0V276.0H1177.5V274.9H1179.0V276.1H1180.5V271.6H1182.0V268.5H1183.5V270.4H1185.0V270.1H1186.5V269.5H1188.0V269.3H1189.5V266.8H1191.0V270.0H1192.5V276.7H1194.0V284.9H1195.5V290.0H1197.0V292.0H1198.5V283.8H1200.0V272.2H1201.5V278.6H1203.0V275.9H1204.5V271.8H1206.0V268.3H1207.5V267.0H1209.0V266.0H1210.5V266.0H1212.0V266.8H1213.5V266.9H1215.0V268.6H1216.5V268.8H1218.0V271.5H1219.5V271.2H1221.0V275.3H1222.5V275.8H1224.0V275.3H1225.5V276.1H1227.0V277.7H1228.5V275.9H1230.0V274.8H1231.5V272.1H1233.0V287.2H1233.5V294.2V301.1H1233.0V318.1H1231.5V314.9H1230.0V311.9H1228.5V311.1H1227.0V310.4H1225.5V311.7H1224.0V311.5H1222.5V313.2H1221.0V316.7H1219.5V319.6H1218.0V320.3H1216.5V321.8H1215.0V322.0H1213.5V322.4H1212.0V322.4H1210.5V321.9H1209.0V322.4H1207.5V321.3H1206.0V318.3H1204.5V313.1H1203.0V311.3H1201.5V316.6H1200.0V304.1H1198.5V296.7H1197.0V298.3H1195.5V304.5H1194.0V310.8H1192.5V317.3H1191.0V319.4H1189.5V320.8H1188.0V318.6H1186.5V317.1H1185.0V317.3H1183.5V322.0H1182.0V318.5H1180.5V312.8H1179.0V311.9H1177.5V313.4H1176.0V306.9H1174.5V300.3H1173.0V301.1H1171.5V308.0H1170.0V315.9H1168.5V321.4H1167.0V322.4H1165.5V322.4H1164.0V313.1H1162.5V296.0H1161.0V297.0H1159.5V298.7H1158.0V300.8H1156.5V301.7H1155.0V310.7H1153.5V305.0H1152.0V296.7H1150.5V298.7H1149.0V300.7H1147.5V304.2H1146.0V307.8H1144.5V309.4H1143.0V313.5H1141.5V314.4H1140.0V318.4H1138.5V319.6H1137.0V322.4H1135.5V315.5H1134.0V310.2H1132.5V310.9H1131.0V317.7H1129.5V299.8H1128.0V295.2H1126.5V295.8H1125.0V300.8H1123.5V307.7H1122.0V317.7H1120.5V318.5H1119.0V318.3H1117.5V295.0H1116.0V295.4H1114.5V296.0H1113.0V299.8H1111.5V305.2H1110.0V310.4H1108.5V314.1H1107.0V311.5H1105.5V302.1H1104.0V297.9H1102.5V301.8H1101.0V307.0H1099.5V314.2H1098.0V316.8H1096.5V318.7H1095.0V320.8H1093.5V316.9H1092.0V317.9H1090.5V322.3H1089.0V317.1H1087.5V314.1H1086.0V312.6H1084.5V315.5H1083.0V311.7H1081.5V303.7H1080.0V299.4H1078.5V300.7H1077.0V309.0H1075.5V314.8H1074.0V318.8H1072.5V321.0H1071.0V319.4H1069.5V314.2H1068.0V307.7H1066.5V304.8H1065.0V310.6H1063.5V314.0H1062.0V316.2H1060.5V320.0H1059.0V319.8H1057.5V319.9H1056.0V319.6H1054.5V322.4H1053.0V322.4H1051.5V322.2H1050.0V322.0H1048.5V319.7H1047.0V320.1H1045.5V322.2H1044.0V318.8H1042.5V319.2H1041.0V322.4H1039.5V319.4H1038.0V316.9H1036.5V302.7H1035.0V306.9H1033.5V306.2H1032.0V304.9H1030.5V301.7H1029.0V304.8H1027.5V306.5H1026.0V303.7H1024.5V299.7H1023.0V297.8H1021.5V300.6H1020.0V303.6H1018.5V306.8H1017.0V309.5H1015.5V312.5H1014.0V310.9H1012.5V298.2H1011.0V295.8H1009.5V297.5H1008.0V301.2H1006.5V310.3H1005.0V320.1H1003.5V322.4H1002.0V318.5H1000.5V321.3H999.0V319.5H997.5V313.8H996.0V317.6H994.5V315.9H993.0V309.6H991.5V311.1H990.0V312.2H988.5V314.5H987.0V301.9H985.5V301.2H984.0V308.2H982.5V316.3H981.0V319.5H979.5V321.9H978.0V318.9H976.5V314.5H975.0V308.0H973.5V300.8H972.0V303.2H970.5V304.4H969.0V306.9H967.5V312.8H966.0V311.4H964.5V311.2H963.0V312.1H961.5V315.0H960.0V320.2H958.5V319.3H957.0V318.8H955.5V321.2H954.0V322.4H952.5V322.4H951.0V320.3H949.5V319.9H948.0V313.1H946.5V307.0H945.0V306.5H943.5V314.4H942.0V300.4H940.5V296.5H939.0V299.4H937.5V303.7H936.0V308.3H934.5V312.7H933.0V317.4H931.5V309.3H930.0V295.6H928.5V297.4H927.0V301.0H925.5V306.2H924.0V309.8H922.5V316.2H921.0V318.9H919.5V318.7H918.0V301.7H916.5V298.7H915.0V306.4H913.5V311.8H912.0V319.1H910.5V322.4H909.0V321.1H907.5V308.2H906.0V295.1H904.5V297.9H903.0V301.1H901.5V306.8H900.0V311.6H898.5V319.9H897.0V321.6H895.5V310.8H894.0V297.2H892.5V295.9H891.0V299.0H889.5V308.9H888.0V319.7H886.5V321.2H885.0V317.6H883.5V302.8H882.0V304.3H880.5V304.3H879.0V302.9H877.5V306.3H876.0V309.1H874.5V314.0H873.0V318.5H871.5V319.2H870.0V318.5H868.5V317.3H867.0V319.6H865.5V312.6H864.0V303.0H862.5Z" fill="#dad7ff"/></svg></div>
<div class="region" style="left:673.6px;top:329px;width:562.3px;height:90px;background:#1fa234"><div class="rlabel" style="top:5.00px;left:7.3px;letter-spacing:0.4px;color:#e4f7e7">Big Synth Remix</div><svg width="570" height="90"><g fill="#b9efc2"><rect x="0.1" y="79.7" width="93.3" height="2.800"/><rect x="92.2" y="65.0" width="8.7" height="2.800"/><rect x="185.4" y="54.8" width="22.3" height="2.800"/><rect x="209.4" y="44.5" width="5.6" height="2.800"/><rect x="220.7" y="47.5" width="4.8" height="2.800"/><rect x="232.5" y="44.5" width="16.1" height="2.800"/><rect x="250.1" y="54.8" width="22.3" height="2.800"/><rect x="279.2" y="54.8" width="16.2" height="2.800"/><rect x="302.5" y="37.2" width="4.8" height="2.800"/><rect x="302.5" y="44.5" width="4.8" height="2.800"/><rect x="314.1" y="40.1" width="6.3" height="2.800"/><rect x="314.1" y="47.5" width="4.8" height="2.800"/><rect x="326.3" y="37.2" width="14.8" height="2.800"/><rect x="326.3" y="44.5" width="14.8" height="2.800"/><rect x="343.5" y="40.1" width="18.2" height="2.800"/><rect x="343.5" y="47.5" width="18.2" height="2.800"/><rect x="372.9" y="54.8" width="16.5" height="2.800"/><rect x="396.4" y="44.5" width="5.8" height="2.800"/><rect x="408.2" y="47.5" width="5.9" height="2.800"/><rect x="419.8" y="44.5" width="16.2" height="2.800"/><rect x="437.4" y="47.5" width="20.7" height="2.800"/><rect x="466.4" y="54.8" width="22.1" height="2.800"/><rect x="490.1" y="37.2" width="5.8" height="2.800"/><rect x="490.1" y="44.5" width="4.3" height="2.800"/><rect x="501.1" y="40.1" width="5.2" height="2.800"/><rect x="501.1" y="47.5" width="6.3" height="2.800"/><rect x="513.3" y="37.2" width="12.1" height="2.800"/><rect x="513.3" y="44.5" width="10.1" height="2.800"/><rect x="536.7" y="34.3" width="17.7" height="2.800"/><rect x="536.7" y="40.1" width="17.7" height="2.800"/></g></svg></div>
<div class="region" style="left:487.1px;top:422px;width:748.8px;height:90px;background:#1fa234"><div class="rlabel" style="top:4.00px;left:5.9px;letter-spacing:0.6px;color:#e4f7e7">Fingerstyle Bass</div><svg width="760" height="90"><rect x="724.9" y="59.8" width="2.900" height="27" fill="#1b8a2c"/><rect x="734.7" y="48.3" width="3.200" height="38.500" fill="#1b8a2c"/><g fill="#b9efc2"><rect x="-0.6" y="78.8" width="20.4" height="2.800"/><rect x="25.1" y="37.8" width="4.8" height="2.800"/><rect x="35.6" y="42.2" width="6.3" height="2.800"/><rect x="45.7" y="37.8" width="16.5" height="2.800"/><rect x="65.1" y="58.2" width="11.7" height="2.800"/><rect x="79.7" y="58.2" width="7.2" height="2.800"/><rect x="85.5" y="49.4" width="7.3" height="2.800"/><rect x="92.8" y="78.8" width="17.5" height="2.800"/><rect x="113.2" y="37.8" width="5.8" height="2.800"/><rect x="126.5" y="42.2" width="4.4" height="2.800"/><rect x="139.8" y="37.8" width="14.1" height="2.800"/><rect x="158.8" y="49.4" width="20.3" height="2.800"/><rect x="187.9" y="78.8" width="17.4" height="2.800"/><rect x="211.1" y="37.8" width="4.4" height="2.800"/><rect x="221.3" y="42.2" width="4.6" height="2.800"/><rect x="232.0" y="37.8" width="15.8" height="2.800"/><rect x="250.9" y="58.2" width="9.7" height="2.800"/><rect x="268.4" y="58.2" width="5.6" height="2.800"/><rect x="274.0" y="49.4" width="4.9" height="2.800"/><rect x="280.1" y="78.8" width="16.0" height="2.800"/><rect x="301.9" y="37.8" width="4.6" height="2.800"/><rect x="313.6" y="42.2" width="4.6" height="2.800"/><rect x="325.4" y="37.8" width="14.6" height="2.800"/><rect x="343.1" y="49.4" width="20.2" height="2.800"/><rect x="362.1" y="65.9" width="7.2" height="2.800"/><rect x="375.2" y="78.8" width="14.5" height="2.800"/><rect x="394.1" y="37.8" width="4.8" height="2.800"/><rect x="407.4" y="42.2" width="5.6" height="2.800"/><rect x="419.1" y="37.8" width="14.8" height="2.800"/><rect x="437.0" y="49.4" width="3.9" height="2.800"/><rect x="445.5" y="49.4" width="4.1" height="2.800"/><rect x="455.9" y="49.4" width="5.4" height="2.800"/><rect x="461.5" y="37.8" width="4.4" height="2.800"/><rect x="467.3" y="78.8" width="17.7" height="2.800"/><rect x="487.9" y="37.8" width="5.9" height="2.800"/><rect x="499.6" y="42.2" width="5.8" height="2.800"/><rect x="511.2" y="37.8" width="17.7" height="2.800"/><rect x="531.9" y="49.4" width="25.0" height="2.800"/><rect x="562.3" y="78.9" width="16.3" height="2.800"/><rect x="584.3" y="37.9" width="5.8" height="2.800"/><rect x="595.8" y="42.2" width="4.6" height="2.800"/><rect x="606.2" y="37.9" width="13.4" height="2.800"/><rect x="622.4" y="58.2" width="11.7" height="2.800"/><rect x="641.2" y="58.2" width="4.8" height="2.800"/><rect x="647.4" y="49.4" width="4.4" height="2.800"/><rect x="651.8" y="78.9" width="17.2" height="2.800"/><rect x="672.1" y="37.9" width="5.7" height="2.800"/><rect x="686.8" y="42.2" width="5.8" height="2.800"/><rect x="699.7" y="49.4" width="4.7" height="2.800"/><rect x="711.5" y="58.2" width="4.6" height="2.800"/><rect x="724.9" y="65.7" width="4.5" height="2.800"/><rect x="730.7" y="69.9" width="13.4" height="2.800"/></g></svg></div>
<div class="region" style="left:487.1px;top:514px;width:748.8px;height:90px;background:#c9a516"><div class="rlabel" style="top:4.00px;left:5.9px;letter-spacing:0.3px;color:#fbf3d6">SoCal</div><svg width="760" height="90"><path transform="translate(-488.1 -515.0)" d="M487.4 573.1H1232V573.7H487.4ZM487.9 565.8L509.4 572.9V573.9L487.9 581.0ZM509.1 573.4L509.1 557.1L509.7 555.1L510.1 556.1L513.3 570.0L521.5 572.9L521.5 573.9L513.3 576.8L510.1 581.6L509.7 582.6L509.1 580.6ZM520.8 573.4L520.8 564.7L521.4 562.7L521.8 563.7L524.7 570.0L533.2 572.9L533.2 573.9L526.4 576.8L521.8 595.0L521.4 596.0L520.8 594.0ZM533.2 569.6L544.9 572.9V573.9L533.2 577.2ZM544.2 573.4L544.2 564.7L544.8 562.7L545.2 563.7L548.1 570.0L556.6 572.9L556.6 573.9L549.8 576.8L545.2 595.0L544.8 596.0L544.2 594.0ZM555.9 573.4L555.9 557.1L556.5 555.1L556.9 556.1L560.2 570.0L568.3 572.9L568.3 573.9L560.2 576.8L556.9 581.6L556.5 582.6L555.9 580.6ZM568.3 569.6L580.0 572.9V573.9L568.3 577.2ZM579.3 573.4L579.3 564.7L579.9 562.7L580.3 563.7L583.2 570.0L591.8 572.9L591.8 573.9L584.9 576.8L580.3 595.0L579.9 596.0L579.3 594.0ZM591.8 569.6L603.5 572.9V573.9L591.8 577.2ZM602.8 573.4L602.8 557.1L603.4 555.1L603.8 556.1L607.0 570.0L615.2 572.9L615.2 573.9L607.0 576.8L603.8 581.6L603.4 582.6L602.8 580.6ZM614.5 573.4L614.5 564.7L615.1 562.7L615.5 563.7L618.3 570.0L626.9 572.9L626.9 573.9L620.0 576.8L615.5 595.0L615.1 596.0L614.5 594.0ZM626.9 569.6L638.6 572.9V573.9L626.9 577.2ZM637.9 573.4L637.9 564.7L638.5 562.7L638.9 563.7L641.7 570.0L650.3 572.9L650.3 573.9L643.4 576.8L638.9 595.0L638.5 596.0L637.9 594.0ZM649.6 573.4L649.6 557.1L650.2 555.1L650.6 556.1L653.8 570.0L662.0 572.9L662.0 573.9L653.8 576.8L650.6 581.6L650.2 582.6L649.6 580.6ZM661.3 573.4L661.3 566.4L661.9 564.4L662.3 565.4L665.0 570.0L673.7 572.9L673.7 573.9L666.3 576.8L662.3 589.9L661.9 590.9L661.3 588.9ZM673.0 573.4L673.0 564.7L673.6 562.7L674.0 563.7L676.8 570.0L685.4 572.9L685.4 573.9L678.6 576.8L674.0 595.0L673.6 596.0L673.0 594.0ZM685.4 569.6L697.1 572.9V573.9L685.4 577.2ZM696.4 573.4L696.4 557.1L697.0 555.1L697.4 556.1L700.6 570.0L708.8 572.9L708.8 573.9L700.6 576.8L697.4 581.6L697.0 582.6L696.4 580.6ZM708.1 573.4L708.1 564.7L708.7 562.7L709.1 563.7L712.0 570.0L720.5 572.9L720.5 573.9L713.7 576.8L709.1 595.0L708.7 596.0L708.1 594.0ZM720.5 569.6L732.2 572.9V573.9L720.5 577.2ZM731.5 573.4L731.5 564.7L732.1 562.7L732.5 563.7L735.4 570.0L743.9 572.9L743.9 573.9L737.1 576.8L732.5 595.0L732.1 596.0L731.5 594.0ZM743.2 573.4L743.2 557.1L743.8 555.1L744.2 556.1L747.5 570.0L755.6 572.9L755.6 573.9L747.5 576.8L744.2 581.6L743.8 582.6L743.2 580.6ZM754.9 573.4L754.9 566.4L755.5 564.4L755.9 565.4L758.7 570.0L767.3 572.9L767.3 573.9L760.0 576.8L755.9 589.9L755.5 590.9L754.9 588.9ZM766.6 573.4L766.6 564.7L767.2 562.7L767.6 563.7L770.5 570.0L779.1 572.9L779.1 573.9L772.2 576.8L767.6 595.0L767.2 596.0L766.6 594.0ZM779.1 569.6L790.8 572.9V573.9L779.1 577.2ZM790.1 573.4L790.1 557.1L790.7 555.1L791.1 556.1L794.3 570.0L802.5 572.9L802.5 573.9L794.3 576.8L791.1 581.6L790.7 582.6L790.1 580.6ZM801.8 573.4L801.8 564.7L802.4 562.7L802.8 563.7L805.6 570.0L814.2 572.9L814.2 573.9L807.3 576.8L802.8 595.0L802.4 596.0L801.8 594.0ZM814.2 569.6L825.9 572.9V573.9L814.2 577.2ZM825.2 573.4L825.2 564.7L825.8 562.7L826.2 563.7L829.0 570.0L837.6 572.9L837.6 573.9L830.7 576.8L826.2 595.0L825.8 596.0L825.2 594.0ZM836.9 573.4L836.9 557.1L837.5 555.1L837.9 556.1L841.1 570.0L849.3 572.9L849.3 573.9L841.1 576.8L837.9 581.6L837.5 582.6L836.9 580.6ZM848.6 573.4L848.6 566.4L849.2 564.4L849.6 565.4L852.3 570.0L861.0 572.9L861.0 573.9L853.6 576.8L849.6 589.9L849.2 590.9L848.6 588.9ZM860.3 573.4L860.3 564.7L860.9 562.7L861.3 563.7L864.1 570.0L872.7 572.9L872.7 573.9L865.9 576.8L861.3 595.0L860.9 596.0L860.3 594.0ZM872.7 569.6L884.4 572.9V573.9L872.7 577.2ZM883.7 573.4L883.7 557.1L884.3 555.1L884.7 556.1L887.9 570.0L896.1 572.9L896.1 573.9L887.9 576.8L884.7 581.6L884.3 582.6L883.7 580.6ZM895.4 573.4L895.4 564.7L896.0 562.7L896.4 563.7L899.3 570.0L907.8 572.9L907.8 573.9L901.0 576.8L896.4 595.0L896.0 596.0L895.4 594.0ZM907.8 569.6L919.5 572.9V573.9L907.8 577.2ZM918.8 573.4L918.8 564.7L919.4 562.7L919.8 563.7L922.7 570.0L931.2 572.9L931.2 573.9L924.4 576.8L919.8 595.0L919.4 596.0L918.8 594.0ZM930.5 573.4L930.5 557.1L931.1 555.1L931.5 556.1L934.8 570.0L942.9 572.9L942.9 573.9L934.8 576.8L931.5 581.6L931.1 582.6L930.5 580.6ZM942.9 569.6L954.6 572.9V573.9L942.9 577.2ZM953.9 573.4L953.9 564.7L954.5 562.7L954.9 563.7L957.8 570.0L966.4 572.9L966.4 573.9L959.5 576.8L954.9 595.0L954.5 596.0L953.9 594.0ZM966.4 569.6L978.1 572.9V573.9L966.4 577.2ZM977.4 573.4L977.4 557.1L978.0 555.1L978.4 556.1L981.6 570.0L989.8 572.9L989.8 573.9L981.6 576.8L978.4 581.6L978.0 582.6L977.4 580.6ZM989.1 573.4L989.1 564.7L989.7 562.7L990.1 563.7L992.9 570.0L1001.5 572.9L1001.5 573.9L994.6 576.8L990.1 595.0L989.7 596.0L989.1 594.0ZM1001.5 569.6L1013.2 572.9V573.9L1001.5 577.2ZM1012.5 573.4L1012.5 564.7L1013.1 562.7L1013.5 563.7L1016.3 570.0L1024.9 572.9L1024.9 573.9L1018.0 576.8L1013.5 595.0L1013.1 596.0L1012.5 594.0ZM1024.2 573.4L1024.2 557.1L1024.8 555.1L1025.2 556.1L1028.4 570.0L1036.6 572.9L1036.6 573.9L1028.4 576.8L1025.2 581.6L1024.8 582.6L1024.2 580.6ZM1036.6 569.6L1048.3 572.9V573.9L1036.6 577.2ZM1047.6 573.4L1047.6 564.7L1048.2 562.7L1048.6 563.7L1051.4 570.0L1060.0 572.9L1060.0 573.9L1053.2 576.8L1048.6 595.0L1048.2 596.0L1047.6 594.0ZM1060.0 569.6L1071.7 572.9V573.9L1060.0 577.2ZM1071.0 573.4L1071.0 557.1L1071.6 555.1L1072.0 556.1L1075.2 570.0L1083.4 572.9L1083.4 573.9L1075.2 576.8L1072.0 581.6L1071.6 582.6L1071.0 580.6ZM1082.7 573.4L1082.7 564.7L1083.3 562.7L1083.7 563.7L1086.6 570.0L1095.1 572.9L1095.1 573.9L1088.3 576.8L1083.7 595.0L1083.3 596.0L1082.7 594.0ZM1095.1 569.6L1106.8 572.9V573.9L1095.1 577.2ZM1106.1 573.4L1106.1 564.7L1106.7 562.7L1107.1 563.7L1110.0 570.0L1118.5 572.9L1118.5 573.9L1111.7 576.8L1107.1 595.0L1106.7 596.0L1106.1 594.0ZM1117.8 573.4L1117.8 557.1L1118.4 555.1L1118.8 556.1L1122.1 570.0L1130.2 572.9L1130.2 573.9L1122.1 576.8L1118.8 581.6L1118.4 582.6L1117.8 580.6ZM1130.2 569.6L1142.0 572.9V573.9L1130.2 577.2ZM1141.2 573.4L1141.2 564.7L1141.9 562.7L1142.2 563.7L1145.1 570.0L1153.7 572.9L1153.7 573.9L1146.8 576.8L1142.2 595.0L1141.9 596.0L1141.2 594.0ZM1153.7 569.6L1165.4 572.9V573.9L1153.7 577.2ZM1164.7 573.4L1164.7 557.1L1165.3 555.1L1165.7 556.1L1168.9 570.0L1177.1 572.9L1177.1 573.9L1168.9 576.8L1165.7 581.6L1165.3 582.6L1164.7 580.6ZM1176.4 573.4L1176.4 564.7L1177.0 562.7L1177.4 563.7L1180.2 570.0L1188.8 572.9L1188.8 573.9L1181.9 576.8L1177.4 595.0L1177.0 596.0L1176.4 594.0ZM1188.8 569.6L1200.5 572.9V573.9L1188.8 577.2ZM1199.7 573.4L1199.7 564.7L1200.3 562.7L1200.7 563.7L1203.5 570.2L1205.9 572.9L1205.9 573.9L1205.2 576.6L1200.7 594.7L1200.3 595.7L1199.7 593.7ZM1205.0 573.4L1205.0 565.4L1205.6 563.4L1206.0 564.4L1208.8 571.0L1211.2 572.9L1211.2 573.9L1208.8 575.8L1206.0 577.4L1205.6 578.4L1205.0 576.4ZM1211.2 573.4L1211.2 557.4L1211.8 555.4L1212.2 556.4L1215.4 570.6L1216.4 572.9L1216.4 573.9L1215.4 576.2L1212.2 581.1L1211.8 582.1L1211.2 580.1ZM1222 566.6L1230 573.4L1222 580.2Z" fill="#fff0b2"/></svg></div>
<div id="left">
<div id="lhead">
<div class="hbtn" style="left:12px"><svg width="48" height="30"><path d="M16 15.2H31.4M23.7 7.5V22.9" stroke="#fff" stroke-width="1.9" fill="none"/></svg></div>
<div class="hbtn" style="left:410px"><svg width="48" height="30"><path d="M19.6 5.5h8.8v3.2l-3.4 3.2h-2l-3.4-3.2z" fill="#fff"/><path d="M24 11v14.5" stroke="#fff" stroke-width="2" fill="none"/><path d="M15 14.5l4.3 4.2-4.3 4.2M33 14.5l-4.3 4.2 4.3 4.2" stroke="#fff" stroke-width="1.4" fill="none"/></svg></div>
</div>
<div class="row sel" style="top:53.6px">
<svg width="70" height="92"><g transform="translate(35.7 44.6) rotate(45)" fill="#1c6bd2"><path d="M-6.6 -6.6V-12.4a6.6 6.6 0 0 1 13.2 0V-6.6z" fill="none" stroke="#1c6bd2" stroke-width="1.9"/><rect x="-7.5" y="-5" width="15" height="5.2"/><path d="M-7.500 1.800h15v7.200l-2.300 7.300q-0.300 0.900-1.300 0.900h-0.500v2.300q0 1-1 1h-4.800q-1 0-1-1v-2.300h-0.500q-1 0-1.300-0.900l-2.300-7.300z"/></g></svg>
<div class="tname" style="letter-spacing:0.4px">Lead Vocal</div>
<div class="btn ms"><svg width="30" height="24"><path d="M8.7 10.1h3.7l5.9-5.2v14.1l-5.900-4.600H8.700z" fill="#f4f4f4"/><path d="M6.400 6.150L21.400 20.550" stroke="#838383" stroke-width="1.300" class="cut"/><path d="M7.300 5.200L22.300 19.600" stroke="#f4f4f4" stroke-width="1.300"/></svg><svg width="30" height="24" style="left:30px"><path d="M7.600 14.800v-2.900a7.600 7.600 0 0 1 15.200 0v2.900" stroke="#f4f4f4" stroke-width="1.350" fill="none"/><g fill="#f4f4f4"><rect x="-1.900" y="-3.600" width="3.800" height="7.200" rx="1.500" transform="translate(10 16.400) rotate(-14)"/><rect x="-1.900" y="-3.600" width="3.800" height="7.200" rx="1.500" transform="translate(20.400 16.400) rotate(14)"/></g></svg><i></i></div>
<div class="btn inp"><svg width="29" height="24"><circle cx="14.800" cy="8.800" r="2.650" fill="#f4f4f4"/><path d="M9.500 11.800A7.390 7.390 0 0 0 20.400 11.800M7.400 13.900A9.820 9.820 0 0 0 22.600 13.900" stroke="#f4f4f4" stroke-width="1.350" fill="none"/></svg></div>
<div class="slider"><svg width="188" height="27"><g fill="#4fd465"><rect x="12" y="7.800" width="57.500" height="4" rx="2"/><rect x="12" y="15.200" width="57.500" height="4" rx="2"/><rect x="85" y="7.500" width="2" height="4.600"/><rect x="85" y="15" width="2" height="4.600"/></g></svg><div class="thumb"></div></div>
<svg width="473" height="92"><path d="M430.09 71.34A15.5 15.5 0 1 1 446.51 71.34" stroke="#414141" stroke-width="5.8" fill="none"/><circle cx="438.3" cy="58.2" r="12.5" fill="#a4a4a4"/><rect x="437.3" y="42.400000000000006" width="2" height="3.6" fill="#3fd158"/><rect x="437.3" y="47.2" width="2" height="3.8" fill="#111"/></svg>
</div>
<div class="row" style="top:145.68px">
<svg width="70" height="92"><g fill="#8c86f2"><path d="M28 35.5a8 5.5 0 0 1 15 0" fill="none" stroke="#8c86f2" stroke-width="1.6"/><path fill-rule="evenodd" d="M21.3 34.2h28.2a1.3 1.3 0 0 1 1.3 1.3v26.3a1.3 1.3 0 0 1-1.3 1.3H21.3a1.3 1.3 0 0 1-1.3-1.3V35.5a1.3 1.3 0 0 1 1.3-1.3zM23.2 38.6a1.3 1.3 0 1 0 2.6 0a1.3 1.3 0 1 0-2.6 0zM27.599999999999998 38.6a1.3 1.3 0 1 0 2.6 0a1.3 1.3 0 1 0-2.6 0zM31.999999999999996 38.6a1.3 1.3 0 1 0 2.6 0a1.3 1.3 0 1 0-2.6 0zM36.400000000000006 38.6a1.3 1.3 0 1 0 2.6 0a1.3 1.3 0 1 0-2.6 0zM45.1 38.6a1.3 1.3 0 1 0 2.6 0a1.3 1.3 0 1 0-2.6 0zM21.60 43.20L23.48 43.20L21.60 45.08L21.60 43.20zM26.20 43.20L28.08 43.20L26.20 45.08L24.32 43.20zM30.80 43.20L32.68 43.20L30.80 45.08L28.92 43.20zM35.40 43.20L37.28 43.20L35.40 45.08L33.52 43.20zM40.00 43.20L41.88 43.20L40.00 45.08L38.12 43.20zM44.60 43.20L46.48 43.20L44.60 45.08L42.72 43.20zM49.20 43.20L49.20 43.20L49.20 45.08L47.32 43.20zM23.90 43.62L25.78 45.50L23.90 47.38L22.02 45.50zM28.50 43.62L30.38 45.50L28.50 47.38L26.62 45.50zM33.10 43.62L34.98 45.50L33.10 47.38L31.22 45.50zM37.70 43.62L39.58 45.50L37.70 47.38L35.82 45.50zM42.30 43.62L44.18 45.50L42.30 47.38L40.42 45.50zM46.90 43.62L48.78 45.50L46.90 47.38L45.02 45.50zM21.60 45.92L23.48 47.80L21.60 49.68L21.60 47.80zM26.20 45.92L28.08 47.80L26.20 49.68L24.32 47.80zM30.80 45.92L32.68 47.80L30.80 49.68L28.92 47.80zM35.40 45.92L37.28 47.80L35.40 49.68L33.52 47.80zM40.00 45.92L41.88 47.80L40.00 49.68L38.12 47.80zM44.60 45.92L46.48 47.80L44.60 49.68L42.72 47.80zM49.20 45.92L49.20 47.80L49.20 49.68L47.32 47.80zM23.90 48.22L25.78 50.10L23.90 51.98L22.02 50.10zM28.50 48.22L30.38 50.10L28.50 51.98L26.62 50.10zM33.10 48.22L34.98 50.10L33.10 51.98L31.22 50.10zM37.70 48.22L39.58 50.10L37.70 51.98L35.82 50.10zM42.30 48.22L44.18 50.10L42.30 51.98L40.42 50.10zM46.90 48.22L48.78 50.10L46.90 51.98L45.02 50.10zM21.60 50.52L23.48 52.40L21.60 54.28L21.60 52.40zM26.20 50.52L28.08 52.40L26.20 54.28L24.32 52.40zM30.80 50.52L32.68 52.40L30.80 54.28L28.92 52.40zM35.40 50.52L37.28 52.40L35.40 54.28L33.52 52.40zM40.00 50.52L41.88 52.40L40.00 54.28L38.12 52.40zM44.60 50.52L46.48 52.40L44.60 54.28L42.72 52.40zM49.20 50.52L49.20 52.40L49.20 54.28L47.32 52.40zM23.90 52.82L25.78 54.70L23.90 56.58L22.02 54.70zM28.50 52.82L30.38 54.70L28.50 56.58L26.62 54.70zM33.10 52.82L34.98 54.70L33.10 56.58L31.22 54.70zM37.70 52.82L39.58 54.70L37.70 56.58L35.82 54.70zM42.30 52.82L44.18 54.70L42.30 56.58L40.42 54.70zM46.90 52.82L48.78 54.70L46.90 56.58L45.02 54.70zM21.60 55.12L23.48 57.00L21.60 58.88L21.60 57.00zM26.20 55.12L28.08 57.00L26.20 58.88L24.32 57.00zM30.80 55.12L32.68 57.00L30.80 58.88L28.92 57.00zM35.40 55.12L37.28 57.00L35.40 58.88L33.52 57.00zM40.00 55.12L41.88 57.00L40.00 58.88L38.12 57.00zM44.60 55.12L46.48 57.00L44.60 58.88L42.72 57.00zM49.20 55.12L49.20 57.00L49.20 58.88L47.32 57.00zM23.90 57.42L25.78 59.30L23.90 61.18L22.02 59.30zM28.50 57.42L30.38 59.30L28.50 61.18L26.62 59.30zM33.10 57.42L34.98 59.30L33.10 61.18L31.22 59.30zM37.70 57.42L39.58 59.30L37.70 61.18L35.82 59.30zM42.30 57.42L44.18 59.30L42.30 61.18L40.42 59.30zM46.90 57.42L48.78 59.30L46.90 61.18L45.02 59.30zM21.60 59.72L23.48 61.60L21.60 61.60L21.60 61.60zM26.20 59.72L28.08 61.60L26.20 61.60L24.32 61.60zM30.80 59.72L32.68 61.60L30.80 61.60L28.92 61.60zM35.40 59.72L37.28 61.60L35.40 61.60L33.52 61.60zM40.00 59.72L41.88 61.60L40.00 61.60L38.12 61.60zM44.60 59.72L46.48 61.60L44.60 61.60L42.72 61.60zM49.20 59.72L49.20 61.60L49.20 61.60L47.32 61.60z"/></g></svg>
<div class="tname" style="letter-spacing:0.02px">Royal Rock</div>
<div class="btn ms"><svg width="30" height="24"><path d="M8.7 10.1h3.7l5.9-5.2v14.1l-5.900-4.600H8.700z" fill="#f4f4f4"/><path d="M6.400 6.150L21.400 20.550" stroke="#676767" stroke-width="1.300" class="cut"/><path d="M7.300 5.200L22.300 19.600" stroke="#f4f4f4" stroke-width="1.300"/></svg><svg width="30" height="24" style="left:30px"><path d="M7.600 14.800v-2.900a7.600 7.600 0 0 1 15.200 0v2.900" stroke="#f4f4f4" stroke-width="1.350" fill="none"/><g fill="#f4f4f4"><rect x="-1.900" y="-3.600" width="3.800" height="7.200" rx="1.500" transform="translate(10 16.400) rotate(-14)"/><rect x="-1.900" y="-3.600" width="3.800" height="7.200" rx="1.500" transform="translate(20.400 16.400) rotate(14)"/></g></svg><i></i></div>
<div class="btn inp"><svg width="29" height="24"><circle cx="14.800" cy="8.800" r="2.650" fill="#f4f4f4"/><path d="M9.500 11.800A7.390 7.390 0 0 0 20.400 11.800M7.400 13.900A9.820 9.820 0 0 0 22.600 13.900" stroke="#f4f4f4" stroke-width="1.350" fill="none"/></svg></div>
<div class="slider"><div class="thumb"></div></div>
<svg width="473" height="92"><path d="M430.09 71.34A15.5 15.5 0 1 1 446.51 71.34" stroke="#414141" stroke-width="5.8" fill="none"/><circle cx="438.3" cy="58.2" r="12.5" fill="#a4a4a4"/><rect x="437.3" y="42.400000000000006" width="2" height="3.6" fill="#3fd158"/><rect x="437.3" y="47.2" width="2" height="3.8" fill="#111"/></svg>
</div>
<div class="row" style="top:237.76px">
<svg width="70" height="92"><g fill="#8c86f2"><path d="M28 35.5a8 5.5 0 0 1 15 0" fill="none" stroke="#8c86f2" stroke-width="1.6"/><path fill-rule="evenodd" d="M21.3 34.2h28.2a1.3 1.3 0 0 1 1.3 1.3v26.3a1.3 1.3 0 0 1-1.3 1.3H21.3a1.3 1.3 0 0 1-1.3-1.3V35.5a1.3 1.3 0 0 1 1.3-1.3zM23.2 38.6a1.3 1.3 0 1 0 2.6 0a1.3 1.3 0 1 0-2.6 0zM27.599999999999998 38.6a1.3 1.3 0 1 0 2.6 0a1.3 1.3 0 1 0-2.6 0zM31.999999999999996 38.6a1.3 1.3 0 1 0 2.6 0a1.3 1.3 0 1 0-2.6 0zM36.400000000000006 38.6a1.3 1.3 0 1 0 2.6 0a1.3 1.3 0 1 0-2.6 0zM45.1 38.6a1.3 1.3 0 1 0 2.6 0a1.3 1.3 0 1 0-2.6 0zM21.60 43.20L23.48 43.20L21.60 45.08L21.60 43.20zM26.20 43.20L28.08 43.20L26.20 45.08L24.32 43.20zM30.80 43.20L32.68 43.20L30.80 45.08L28.92 43.20zM35.40 43.20L37.28 43.20L35.40 45.08L33.52 43.20zM40.00 43.20L41.88 43.20L40.00 45.08L38.12 43.20zM44.60 43.20L46.48 43.20L44.60 45.08L42.72 43.20zM49.20 43.20L49.20 43.20L49.20 45.08L47.32 43.20zM23.90 43.62L25.78 45.50L23.90 47.38L22.02 45.50zM28.50 43.62L30.38 45.50L28.50 47.38L26.62 45.50zM33.10 43.62L34.98 45.50L33.10 47.38L31.22 45.50zM37.70 43.62L39.58 45.50L37.70 47.38L35.82 45.50zM42.30 43.62L44.18 45.50L42.30 47.38L40.42 45.50zM46.90 43.62L48.78 45.50L46.90 47.38L45.02 45.50zM21.60 45.92L23.48 47.80L21.60 49.68L21.60 47.80zM26.20 45.92L28.08 47.80L26.20 49.68L24.32 47.80zM30.80 45.92L32.68 47.80L30.80 49.68L28.92 47.80zM35.40 45.92L37.28 47.80L35.40 49.68L33.52 47.80zM40.00 45.92L41.88 47.80L40.00 49.68L38.12 47.80zM44.60 45.92L46.48 47.80L44.60 49.68L42.72 47.80zM49.20 45.92L49.20 47.80L49.20 49.68L47.32 47.80zM23.90 48.22L25.78 50.10L23.90 51.98L22.02 50.10zM28.50 48.22L30.38 50.10L28.50 51.98L26.62 50.10zM33.10 48.22L34.98 50.10L33.10 51.98L31.22 50.10zM37.70 48.22L39.58 50.10L37.70 51.98L35.82 50.10zM42.30 48.22L44.18 50.10L42.30 51.98L40.42 50.10zM46.90 48.22L48.78 50.10L46.90 51.98L45.02 50.10zM21.60 50.52L23.48 52.40L21.60 54.28L21.60 52.40zM26.20 50.52L28.08 52.40L26.20 54.28L24.32 52.40zM30.80 50.52L32.68 52.40L30.80 54.28L28.92 52.40zM35.40 50.52L37.28 52.40L35.40 54.28L33.52 52.40zM40.00 50.52L41.88 52.40L40.00 54.28L38.12 52.40zM44.60 50.52L46.48 52.40L44.60 54.28L42.72 52.40zM49.20 50.52L49.20 52.40L49.20 54.28L47.32 52.40zM23.90 52.82L25.78 54.70L23.90 56.58L22.02 54.70zM28.50 52.82L30.38 54.70L28.50 56.58L26.62 54.70zM33.10 52.82L34.98 54.70L33.10 56.58L31.22 54.70zM37.70 52.82L39.58 54.70L37.70 56.58L35.82 54.70zM42.30 52.82L44.18 54.70L42.30 56.58L40.42 54.70zM46.90 52.82L48.78 54.70L46.90 56.58L45.02 54.70zM21.60 55.12L23.48 57.00L21.60 58.88L21.60 57.00zM26.20 55.12L28.08 57.00L26.20 58.88L24.32 57.00zM30.80 55.12L32.68 57.00L30.80 58.88L28.92 57.00zM35.40 55.12L37.28 57.00L35.40 58.88L33.52 57.00zM40.00 55.12L41.88 57.00L40.00 58.88L38.12 57.00zM44.60 55.12L46.48 57.00L44.60 58.88L42.72 57.00zM49.20 55.12L49.20 57.00L49.20 58.88L47.32 57.00zM23.90 57.42L25.78 59.30L23.90 61.18L22.02 59.30zM28.50 57.42L30.38 59.30L28.50 61.18L26.62 59.30zM33.10 57.42L34.98 59.30L33.10 61.18L31.22 59.30zM37.70 57.42L39.58 59.30L37.70 61.18L35.82 59.30zM42.30 57.42L44.18 59.30L42.30 61.18L40.42 59.30zM46.90 57.42L48.78 59.30L46.90 61.18L45.02 59.30zM21.60 59.72L23.48 61.60L21.60 61.60L21.60 61.60zM26.20 59.72L28.08 61.60L26.20 61.60L24.32 61.60zM30.80 59.72L32.68 61.60L30.80 61.60L28.92 61.60zM35.40 59.72L37.28 61.60L35.40 61.60L33.52 61.60zM40.00 59.72L41.88 61.60L40.00 61.60L38.12 61.60zM44.60 59.72L46.48 61.60L44.60 61.60L42.72 61.60zM49.20 59.72L49.20 61.60L49.20 61.60L47.32 61.60z"/></g></svg>
<div class="tname" style="letter-spacing:0.65px">Burnin' Tweed</div>
<div class="btn ms"><svg width="30" height="24"><path d="M8.7 10.1h3.7l5.9-5.2v14.1l-5.900-4.600H8.700z" fill="#f4f4f4"/><path d="M6.400 6.150L21.400 20.550" stroke="#676767" stroke-width="1.300" class="cut"/><path d="M7.300 5.200L22.300 19.600" stroke="#f4f4f4" stroke-width="1.300"/></svg><svg width="30" height="24" style="left:30px"><path d="M7.600 14.800v-2.900a7.600 7.600 0 0 1 15.200 0v2.900" stroke="#f4f4f4" stroke-width="1.350" fill="none"/><g fill="#f4f4f4"><rect x="-1.900" y="-3.600" width="3.800" height="7.200" rx="1.500" transform="translate(10 16.400) rotate(-14)"/><rect x="-1.900" y="-3.600" width="3.800" height="7.200" rx="1.500" transform="translate(20.400 16.400) rotate(14)"/></g></svg><i></i></div>
<div class="btn inp"><svg width="29" height="24"><circle cx="14.800" cy="8.800" r="2.650" fill="#f4f4f4"/><path d="M9.500 11.800A7.390 7.390 0 0 0 20.400 11.800M7.400 13.900A9.820 9.820 0 0 0 22.600 13.900" stroke="#f4f4f4" stroke-width="1.350" fill="none"/></svg></div>
<div class="slider"><div class="thumb"></div></div>
<svg width="473" height="92"><path d="M430.09 71.34A15.5 15.5 0 1 1 446.51 71.34" stroke="#414141" stroke-width="5.8" fill="none"/><circle cx="438.3" cy="58.2" r="12.5" fill="#a4a4a4"/><rect x="437.3" y="42.400000000000006" width="2" height="3.6" fill="#3fd158"/><rect x="437.3" y="47.2" width="2" height="3.8" fill="#111"/></svg>
</div>
<div class="row" style="top:329.84000000000003px">
<svg width="70" height="92"><g fill="none" stroke="#22cc3e" stroke-width="1.5"><rect x="18" y="29" width="34.4" height="15.2"/><path d="M18 37.600h34.400"/><path d="M20.5 40.9h29.4" stroke-width="2"/><path d="M26.6 44.6L45 63.6M43.9 44.6L25 63.6" stroke-width="1.5"/></g><circle cx="24.6" cy="63.8" r="1.6" fill="#22cc3e"/><circle cx="45.5" cy="63.8" r="1.6" fill="#22cc3e"/><rect x="22.1" y="31.3" width="1.4" height="1.4" fill="#22cc3e"/><rect x="27.900000000000002" y="31.3" width="1.4" height="1.4" fill="#22cc3e"/><rect x="30.8" y="31.3" width="1.4" height="1.4" fill="#22cc3e"/><rect x="33.699999999999996" y="31.3" width="1.4" height="1.4" fill="#22cc3e"/><rect x="39.5" y="31.3" width="1.4" height="1.4" fill="#22cc3e"/><rect x="42.4" y="31.3" width="1.4" height="1.4" fill="#22cc3e"/><rect x="45.3" y="31.3" width="1.4" height="1.4" fill="#22cc3e"/><rect x="48.3" y="31.3" width="1.4" height="1.4" fill="#22cc3e"/><rect x="20.6" y="34.3" width="1.4" height="1.4" fill="#22cc3e"/><rect x="23.5" y="34.3" width="1.4" height="1.4" fill="#22cc3e"/><rect x="27.900000000000002" y="34.3" width="1.4" height="1.4" fill="#22cc3e"/><rect x="30.8" y="34.3" width="1.4" height="1.4" fill="#22cc3e"/><rect x="33.699999999999996" y="34.3" width="1.4" height="1.4" fill="#22cc3e"/><rect x="39.5" y="34.3" width="1.4" height="1.4" fill="#22cc3e"/><rect x="42.4" y="34.3" width="1.4" height="1.4" fill="#22cc3e"/><rect x="45.3" y="34.3" width="1.4" height="1.4" fill="#22cc3e"/></svg>
<div class="tname" style="letter-spacing:0.2px">Big Synth Remix</div>
<div class="btn ms"><svg width="30" height="24"><path d="M8.7 10.1h3.7l5.9-5.2v14.1l-5.900-4.600H8.700z" fill="#f4f4f4"/><path d="M6.400 6.150L21.400 20.550" stroke="#676767" stroke-width="1.300" class="cut"/><path d="M7.300 5.200L22.300 19.600" stroke="#f4f4f4" stroke-width="1.300"/></svg><svg width="30" height="24" style="left:30px"><path d="M7.600 14.800v-2.900a7.600 7.600 0 0 1 15.200 0v2.900" stroke="#f4f4f4" stroke-width="1.350" fill="none"/><g fill="#f4f4f4"><rect x="-1.900" y="-3.600" width="3.800" height="7.200" rx="1.500" transform="translate(10 16.400) rotate(-14)"/><rect x="-1.900" y="-3.600" width="3.800" height="7.200" rx="1.500" transform="translate(20.400 16.400) rotate(14)"/></g></svg><i></i></div>
<div class="slider"><div class="thumb"></div></div>
<svg width="473" height="92"><path d="M430.09 71.34A15.5 15.5 0 1 1 446.51 71.34" stroke="#414141" stroke-width="5.8" fill="none"/><circle cx="438.3" cy="58.2" r="12.5" fill="#a4a4a4"/><rect x="437.3" y="42.400000000000006" width="2" height="3.6" fill="#3fd158"/><rect x="437.3" y="47.2" width="2" height="3.8" fill="#111"/></svg>
</div>
<div class="row" style="top:421.92px">
<svg width="70" height="92"><g transform="translate(0 0.900)"><g fill="#22cc3e" stroke="none"><path d="M30.5 47.8L48.6 29.4" stroke="#22cc3e" stroke-width="2.2" fill="none"/><path d="M46.6 29.6l1.2-2.6 1 .9 .9-1.9 1 .9 .9-1.8 1.2 1 1.1-1.4 1.6 2.2-4.4 4.4-2.4.4z"/><path transform="translate(0 -0.900)" d="M31 44.300C32.300 44.600 31.900 46.400 30.700 48L32.700 51.300C33.400 52.200 34.200 53.300 34.900 54.100C35.700 55.200 34.500 56.800 33 57C31 57.400 29.700 58.600 28.900 60.600C28.100 62.600 28.700 64.600 26.700 66.600C24.400 68.900 19.400 69.100 16 66.500C12.500 63.800 12.300 58.600 15.500 56C18.200 53.900 21.800 55 24 52C26 49.200 28.600 45.400 31 44.300Z"/></g><circle cx="23.400" cy="58.200" r="0.750" fill="#565656"/><circle cx="22.300" cy="60.300" r="0.750" fill="#565656"/><path d="M19.600 62.200l3.400 3.200" stroke="#565656" stroke-width="1.100"/></g></svg>
<div class="tname" style="letter-spacing:0.31px">Fingerstyle Bass</div>
<div class="btn ms"><svg width="30" height="24"><path d="M8.7 10.1h3.7l5.9-5.2v14.1l-5.900-4.600H8.700z" fill="#f4f4f4"/><path d="M6.400 6.150L21.400 20.550" stroke="#676767" stroke-width="1.300" class="cut"/><path d="M7.300 5.200L22.300 19.600" stroke="#f4f4f4" stroke-width="1.300"/></svg><svg width="30" height="24" style="left:30px"><path d="M7.600 14.800v-2.900a7.600 7.600 0 0 1 15.200 0v2.900" stroke="#f4f4f4" stroke-width="1.350" fill="none"/><g fill="#f4f4f4"><rect x="-1.900" y="-3.600" width="3.800" height="7.200" rx="1.500" transform="translate(10 16.400) rotate(-14)"/><rect x="-1.900" y="-3.600" width="3.800" height="7.200" rx="1.500" transform="translate(20.400 16.400) rotate(14)"/></g></svg><i></i></div>
<div class="slider"><div class="thumb"></div></div>
<svg width="473" height="92"><path d="M430.09 71.34A15.5 15.5 0 1 1 446.51 71.34" stroke="#414141" stroke-width="5.8" fill="none"/><circle cx="438.3" cy="58.2" r="12.5" fill="#a4a4a4"/><rect x="437.3" y="42.400000000000006" width="2" height="3.6" fill="#3fd158"/><rect x="437.3" y="47.2" width="2" height="3.8" fill="#111"/></svg>
</div>
<div class="row" style="top:514.0px">
<svg width="70" height="92"><g fill="#f1c31f" stroke="none"><ellipse cx="25" cy="28.2" rx="11" ry="1.6"/><path d="M24.2 24.6h1.6v3h-1.600z"/><path d="M21 29v33" stroke="#f1c31f" stroke-width="1.5"/><path d="M23.5 29.5L14.300 35.4" stroke="#f1c31f" stroke-width="1.6"/><ellipse cx="51.3" cy="36" rx="5" ry="1.300"/><path d="M49.4 32.2v29.500" stroke="#f1c31f" stroke-width="1.5"/><rect x="25" y="32.600" width="9.800" height="8" rx="0.8"/><rect x="36.600" y="32.600" width="9.800" height="8" rx="0.8"/><rect x="14.300" y="39.600" width="10.200" height="12.600" rx="0.8"/><rect x="45" y="41.800" width="9.300" height="8.400" rx="0.8"/></g><circle cx="35.500" cy="53.400" r="10.300" fill="#565656" stroke="#f1c31f" stroke-width="1.700"/><path d="M21 59.500L15.300 63.900M21 59.500L26.600 63.900M49.400 59.500L43.800 63.900M49.400 59.500L55 63.900" stroke="#f1c31f" stroke-width="1.600" fill="none"/></svg>
<div class="tname" style="letter-spacing:0.02px">SoCal</div>
<div class="btn ms"><svg width="30" height="24"><path d="M8.7 10.1h3.7l5.9-5.2v14.1l-5.900-4.600H8.700z" fill="#f4f4f4"/><path d="M6.400 6.150L21.400 20.550" stroke="#676767" stroke-width="1.300" class="cut"/><path d="M7.300 5.200L22.300 19.600" stroke="#f4f4f4" stroke-width="1.300"/></svg><svg width="30" height="24" style="left:30px"><path d="M7.600 14.800v-2.900a7.600 7.600 0 0 1 15.200 0v2.900" stroke="#f4f4f4" stroke-width="1.350" fill="none"/><g fill="#f4f4f4"><rect x="-1.900" y="-3.600" width="3.800" height="7.200" rx="1.500" transform="translate(10 16.400) rotate(-14)"/><rect x="-1.900" y="-3.600" width="3.800" height="7.200" rx="1.500" transform="translate(20.400 16.400) rotate(14)"/></g></svg><i></i></div>
<div class="slider"><div class="thumb"></div></div>
<svg width="473" height="92"><path d="M430.09 71.34A15.5 15.5 0 1 1 446.51 71.34" stroke="#414141" stroke-width="5.8" fill="none"/><circle cx="438.3" cy="58.2" r="12.5" fill="#a4a4a4"/><rect x="437.3" y="42.400000000000006" width="2" height="3.6" fill="#3fd158"/><rect x="437.3" y="47.2" width="2" height="3.8" fill="#111"/></svg>
</div>
<div class="sep" style="top:143.70px"></div>
<div class="sep" style="top:235.78px"></div>
<div class="sep" style="top:327.86px"></div>
<div class="sep" style="top:419.94px"></div>
<div class="sep" style="top:512.02px"></div>
<div class="abs" style="left:0;top:0;width:473px;height:1.5px;background:#262626"></div>
<div class="abs" style="left:0;top:0;width:1.5px;height:606px;background:#2a2a2a"></div>
<div class="abs" style="left:472px;top:0;width:1px;height:606px;background:rgba(24,24,24,.55)"></div>
</div>
<svg width="1237" height="606" style="pointer-events:none"><rect x="484.700" y="48" width="3.500" height="558" fill="rgba(0,0,0,.32)"/><path d="M474 29.500a3.500 3.500 0 0 1 3.500-3.500h18a3.500 3.500 0 0 1 3.500 3.500v9l-12.500 13l-12.500-13z" fill="#adadad" stroke="rgba(20,20,20,.6)" stroke-width="0.800"/><rect x="485.700" y="30" width="1.500" height="576" fill="#fff"/><rect x="1235.800" y="0" width="1.200" height="606" fill="#fff"/><rect x="0" y="604.600" width="1237" height="1.400" fill="#fff"/></svg>
</body></html>
